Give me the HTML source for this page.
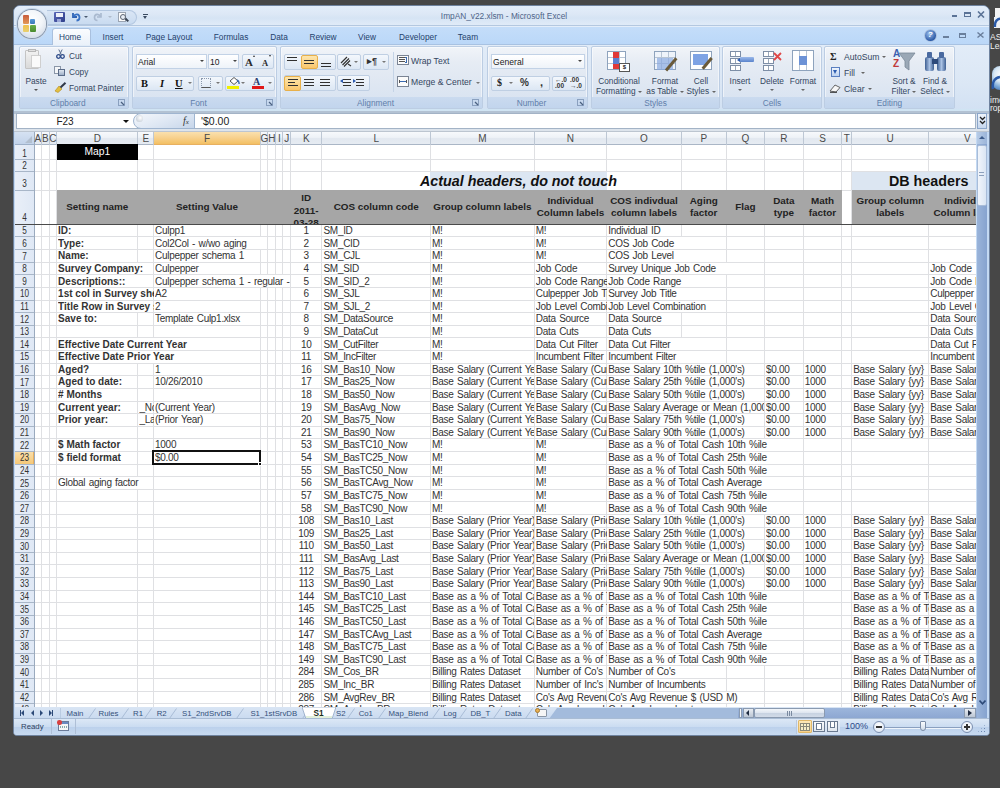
<!DOCTYPE html><html><head><meta charset="utf-8"><style>

*{margin:0;padding:0;box-sizing:border-box}
html,body{width:1000px;height:788px;overflow:hidden;background:#474747;font-family:"Liberation Sans",sans-serif}
.a{position:absolute}
.t{position:absolute;white-space:nowrap;overflow:hidden;font-size:10px;letter-spacing:-0.3px;word-spacing:1px;color:#333;line-height:12px}
.t.b{letter-spacing:0;word-spacing:0}
.b{font-weight:bold}
.ch{position:absolute;font-size:10px;color:#4a4a4a;text-align:center;line-height:12px;white-space:nowrap;overflow:hidden}
.rh{position:absolute;font-size:10px;color:#333;text-align:center;white-space:nowrap;transform:scaleX(0.82)}
.gl{position:absolute;background:#dfe0e3}
.rib{position:absolute;font-size:8.3px;color:#2a3f63;white-space:nowrap;line-height:10px}
.grp{position:absolute;border:1px solid #bccde3;border-radius:2px;background:linear-gradient(#f1f4f9 0%,#e6ecf4 25%,#dfe7f2 60%,#d6e2f1 100%);box-shadow:inset 0 0 0 1px rgba(255,255,255,0.5)}
.glab{position:absolute;left:0;right:0;bottom:0;height:11px;background:linear-gradient(#cadaef,#c2d5ed);font-size:8.3px;color:#5f7eaa;text-align:center;line-height:12px}
.tab{position:absolute;font-size:8.3px;color:#24416b;white-space:nowrap;top:31.5px;line-height:10px}
.btn{position:absolute;border:1px solid #bfcfe3;border-radius:2px;background:linear-gradient(#f3f7fc,#dce7f4)}
.sht{position:absolute;font-size:9px;color:#34507a;top:707.5px;white-space:nowrap}

</style></head><body>
<div class="a" style="left:994.5px;top:8px;width:6px;height:8.5px;background:#f4f4f4"></div>
<div class="a" style="left:993.5px;top:16.5px;width:7px;height:11.5px;background:#eef2f6"></div>
<svg class="a" style="left:993px;top:16px" width="8" height="12"><path d="M2 11 C1.5 6 3.5 3 8 2.5" fill="none" stroke="#2a5aa8" stroke-width="2.4"/></svg>
<div class="a" style="left:990px;top:33px;font-size:8.5px;color:#f0f0f0;line-height:8.5px">ASP<br>Lea</div>
<div class="a" style="left:991.5px;top:66px;width:16px;height:24px;border-radius:8px;background:radial-gradient(circle at 60% 35%,#ffffff 0%,#d8e8f4 40%,#7aa8d8 70%,#3a6cb0 100%)"></div>
<svg class="a" style="left:991px;top:74px" width="9" height="16"><path d="M2 15 C1 9 3 4 9 3" fill="none" stroke="#2a5aa8" stroke-width="2.6"/></svg>
<div class="a" style="left:990px;top:95.5px;font-size:8.5px;color:#f0f0f0;line-height:8.5px">ime<br>rop</div>
<div class="a" style="left:13px;top:5px;width:977px;height:731px;border-radius:7px 7px 4px 4px;background:#c3d9f3;border:1px solid #6f839f"></div>
<div class="a" style="left:14px;top:6px;width:975px;height:19.5px;border-radius:6px 6px 0 0;background:linear-gradient(#e3edf9 0%,#dde8f6 40%,#d6e4f4 60%,#e2ecf8 100%)"></div>
<div class="a" style="left:14px;top:25px;width:975px;height:1px;background:#b4c8e0"></div>
<div class="a" style="left:14px;top:26px;width:975px;height:1px;background:#e4eefa"></div>
<div class="a" style="left:4px;width:1000px;top:11px;text-align:center;font-size:8.3px;color:#4e6488;line-height:11px">ImpAN_v22.xlsm - Microsoft Excel</div>
<div class="a" style="left:952px;top:15px;width:5px;height:2px;background:#5b7396"></div>
<div class="a" style="left:964px;top:12px;width:7px;height:5px;border:1px solid #5b7396;border-top-width:2px"></div>
<svg class="a" style="left:977px;top:10.5px" width="8" height="7"><path d="M1 0.5 L7 6.5 M7 0.5 L1 6.5" stroke="#5b7396" stroke-width="1.6"/></svg>
<div class="a" style="left:47px;top:10px;width:90px;height:15px;border-radius:0 8px 8px 0;background:linear-gradient(#dae6f5,#c9dbf0);border:1px solid #b3c7e0;border-left:none"></div>
<div class="a" style="left:54px;top:12px;width:10.5px;height:10px;background:linear-gradient(135deg,#5b68b8,#2f3f8a);border-radius:1px"></div>
<div class="a" style="left:56px;top:12.5px;width:6.5px;height:4px;background:#eef0f8"></div>
<div class="a" style="left:57px;top:19px;width:4px;height:3px;background:#9aa6d8"></div>
<svg class="a" style="left:70px;top:11px" width="11" height="11"><path d="M3 2 L3 6 L7 6" fill="none" stroke="#2f63b5" stroke-width="1.8"/><path d="M3.5 5.5 C5 2.5 9.5 2.5 9.5 6.5 C9.5 8.5 8 9.5 6.5 9.5" fill="none" stroke="#3a72c4" stroke-width="1.8"/></svg>
<div class="a" style="left:84px;top:16px;border-left:2px solid transparent;border-right:2px solid transparent;border-top:2px solid #4a5a70"></div>
<svg class="a" style="left:93px;top:11px" width="11" height="11"><path d="M8 2 L8 6 L4 6" fill="none" stroke="#a9b9cf" stroke-width="1.6"/><path d="M7.5 5.5 C6 2.5 1.5 2.5 1.5 6.5 C1.5 8.5 3 9.5 4.5 9.5" fill="none" stroke="#a9b9cf" stroke-width="1.6"/></svg>
<div class="a" style="left:108px;top:16px;border-left:2px solid transparent;border-right:2px solid transparent;border-top:2px solid #b0bccb"></div>
<div class="a" style="left:118px;top:11.5px;width:8px;height:10.5px;background:#fbfbfb;border:1px solid #9aa4b2"></div>
<div class="a" style="left:120px;top:14px;width:6px;height:6px;border:1.3px solid #5a6472;border-radius:50%;background:#e8eef6"></div>
<div class="a" style="left:125px;top:19px;width:4px;height:1.6px;background:#3a4452;transform:rotate(45deg)"></div>
<div class="a" style="left:143px;top:13.5px;width:5px;height:1px;background:#3a4a60"></div>
<div class="a" style="left:143px;top:16px;border-left:2.5px solid transparent;border-right:2.5px solid transparent;border-top:3px solid #3a4a60"></div>
<div class="a" style="left:14px;top:27px;width:975px;height:17.5px;background:linear-gradient(#c4ddf9,#bad7f8)"></div>
<div class="a" style="left:14px;top:43.8px;width:975px;height:1px;background:#a8c2e2"></div>
<div class="a" style="left:51.5px;top:28px;width:39px;height:17.5px;border:1px solid #a9c0de;border-bottom:none;border-radius:3px 3px 0 0;background:linear-gradient(#fafcff,#e9f0f9)"></div>
<div class="tab" style="left:20px;width:100px;text-align:center">Home</div>
<div class="tab" style="left:63px;width:100px;text-align:center">Insert</div>
<div class="tab" style="left:119px;width:100px;text-align:center">Page Layout</div>
<div class="tab" style="left:181px;width:100px;text-align:center">Formulas</div>
<div class="tab" style="left:229px;width:100px;text-align:center">Data</div>
<div class="tab" style="left:273px;width:100px;text-align:center">Review</div>
<div class="tab" style="left:317px;width:100px;text-align:center">View</div>
<div class="tab" style="left:368px;width:100px;text-align:center">Developer</div>
<div class="tab" style="left:418px;width:100px;text-align:center">Team</div>
<div class="a" style="left:925px;top:30px;width:10.5px;height:10.5px;border-radius:50%;background:radial-gradient(circle at 40% 35%,#9cc0ee,#2d5aa6 70%,#5a86c8);box-shadow:0 0 0 0.8px #a8bcd8;color:#fff;font-size:8px;font-weight:bold;text-align:center;line-height:10.5px;font-style:italic">?</div>
<div class="a" style="left:943px;top:36px;width:6px;height:1.6px;background:#6a7f9c"></div>
<div class="a" style="left:959px;top:32.5px;width:7px;height:5px;border:1px solid #6a7f9c;border-top-width:2px"></div>
<svg class="a" style="left:976.5px;top:32px" width="7" height="6"><path d="M0.5 0.5 L6.5 5.5 M6.5 0.5 L0.5 5.5" stroke="#6a7f9c" stroke-width="1.4"/></svg>
<div class="a" style="left:14px;top:44.8px;width:975px;height:65.5px;background:linear-gradient(#e2ecf8,#dbe7f5 60%,#d2e1f3)"></div>
<div class="grp" style="left:18.5px;top:46px;width:110.5px;height:62.5px"><div class="glab" style="padding-right:12px">Clipboard</div><svg class="a" style="right:3px;bottom:2px" width="7" height="7"><rect x="0.5" y="0.5" width="6" height="6" fill="none" stroke="#8aa0bf" stroke-width="1"/><path d="M3 3 L6 6" stroke="#4a6080" stroke-width="1.2"/></svg></div>
<div class="grp" style="left:132px;top:46px;width:145px;height:62.5px"><div class="glab" style="padding-right:12px">Font</div><svg class="a" style="right:3px;bottom:2px" width="7" height="7"><rect x="0.5" y="0.5" width="6" height="6" fill="none" stroke="#8aa0bf" stroke-width="1"/><path d="M3 3 L6 6" stroke="#4a6080" stroke-width="1.2"/></svg></div>
<div class="grp" style="left:280px;top:46px;width:203px;height:62.5px"><div class="glab" style="padding-right:12px">Alignment</div><svg class="a" style="right:3px;bottom:2px" width="7" height="7"><rect x="0.5" y="0.5" width="6" height="6" fill="none" stroke="#8aa0bf" stroke-width="1"/><path d="M3 3 L6 6" stroke="#4a6080" stroke-width="1.2"/></svg></div>
<div class="grp" style="left:487px;top:46px;width:101px;height:62.5px"><div class="glab" style="padding-right:12px">Number</div><svg class="a" style="right:3px;bottom:2px" width="7" height="7"><rect x="0.5" y="0.5" width="6" height="6" fill="none" stroke="#8aa0bf" stroke-width="1"/><path d="M3 3 L6 6" stroke="#4a6080" stroke-width="1.2"/></svg></div>
<div class="grp" style="left:591px;top:46px;width:129px;height:62.5px"><div class="glab" style="">Styles</div></div>
<div class="grp" style="left:722px;top:46px;width:100px;height:62.5px"><div class="glab" style="">Cells</div></div>
<div class="grp" style="left:824px;top:46px;width:131px;height:62.5px"><div class="glab" style="">Editing</div></div>
<div class="a" style="left:25px;top:50px;width:14px;height:19px;background:linear-gradient(#f2f2f2,#d9d9d9);border:1px solid #c4c4c4;border-radius:1px"></div>
<div class="a" style="left:28px;top:49px;width:8px;height:3px;background:#e0e0e0;border:1px solid #b8b8b8"></div>
<div class="a" style="left:31px;top:55px;width:10px;height:13px;background:#fafafa;border:1px solid #cfcfcf"></div>
<div class="rib" style="left:20px;width:32px;text-align:center;top:76px;color:#34465f">Paste</div>
<div class="a" style="left:34px;top:89px;border-left:2px solid transparent;border-right:2px solid transparent;border-top:2px solid #555"></div>
<svg class="a" style="left:56px;top:49px" width="9" height="10"><circle cx="2.5" cy="7.5" r="1.8" fill="none" stroke="#2c4a8a" stroke-width="1.3"/><circle cx="6.5" cy="7.5" r="1.8" fill="none" stroke="#2c4a8a" stroke-width="1.3"/><path d="M2.8 0.5 L5.5 6 M6.2 0.5 L3.5 6" stroke="#5a6e90" stroke-width="1"/></svg>
<div class="rib" style="left:69px;top:51px;color:#34465f">Cut</div>
<div class="a" style="left:54px;top:66px;width:7px;height:8px;border:1px solid #8a96a8;background:#f4f6f9"></div>
<div class="a" style="left:58px;top:69px;width:7px;height:7px;border:1px solid #5a6b88;background:linear-gradient(#dfe6f0,#9fb0c8)"></div>
<div class="rib" style="left:69px;top:67px;color:#34465f">Copy</div>
<svg class="a" style="left:54px;top:82px" width="13" height="11"><path d="M1 9 L5 4 L8 7 L4 10.5 Z" fill="#e4c040" stroke="#b08a20" stroke-width="0.6"/><path d="M6.5 5.5 L11.5 0.8" stroke="#303848" stroke-width="2"/></svg>
<div class="rib" style="left:69px;top:83px;color:#34465f">Format Painter</div>
<div class="a" style="left:136px;top:53.5px;width:71px;height:15.5px;background:linear-gradient(#ffffff,#eef3f9);border:1px solid #c2d2e6"></div>
<div class="rib" style="left:138px;top:57px;color:#222;font-size:8.6px">Arial</div>
<div class="a" style="left:200px;top:60px;border-left:2px solid transparent;border-right:2px solid transparent;border-top:2px solid #444"></div>
<div class="a" style="left:208px;top:53.5px;width:31px;height:15.5px;background:linear-gradient(#ffffff,#eef3f9);border:1px solid #c2d2e6"></div>
<div class="rib" style="left:210px;top:57px;color:#222;font-size:8.6px">10</div>
<div class="a" style="left:233px;top:60px;border-left:2px solid transparent;border-right:2px solid transparent;border-top:2px solid #444"></div>
<div class="btn" style="left:242px;top:54px;width:32px;height:15px"></div>
<div class="a" style="left:245px;top:56px;font-family:'Liberation Serif',serif;font-weight:bold;font-size:11px;color:#2a2a2a;line-height:12px">A</div>
<div class="a" style="left:253px;top:55px;border-left:1.5px solid transparent;border-right:1.5px solid transparent;border-bottom:2px solid #333"></div>
<div class="a" style="left:262px;top:58px;font-family:'Liberation Serif',serif;font-weight:bold;font-size:8.5px;color:#2a2a2a;line-height:10px">A</div>
<div class="a" style="left:269px;top:55px;border-left:1.5px solid transparent;border-right:1.5px solid transparent;border-top:2px solid #333"></div>
<div class="btn" style="left:136px;top:75.5px;width:58px;height:15.5px"></div>
<div class="a" style="left:141px;top:77px;font-family:'Liberation Serif',serif;font-weight:bold;font-size:10.5px;color:#111;line-height:13px">B</div>
<div class="a" style="left:160px;top:77px;font-family:'Liberation Serif',serif;font-style:italic;font-weight:bold;font-size:10.5px;color:#111;line-height:13px">I</div>
<div class="a" style="left:175px;top:77px;font-family:'Liberation Serif',serif;font-weight:bold;font-size:10.5px;color:#111;line-height:13px;text-decoration:underline">U</div>
<div class="a" style="left:188px;top:82px;border-left:2px solid transparent;border-right:2px solid transparent;border-top:2px solid #777"></div>
<div class="btn" style="left:198px;top:75.5px;width:25px;height:15.5px"></div>
<div class="a" style="left:201px;top:78px;width:10px;height:10px;border:1px dotted #8a98ac;border-bottom:1.5px solid #555;background:linear-gradient(90deg,transparent 45%,#aab4c4 45%,#aab4c4 55%,transparent 55%),linear-gradient(transparent 45%,#aab4c4 45%,#aab4c4 55%,transparent 55%)"></div>
<div class="a" style="left:216px;top:82px;border-left:2px solid transparent;border-right:2px solid transparent;border-top:2px solid #777"></div>
<div class="btn" style="left:225px;top:75.5px;width:50px;height:15.5px"></div>
<svg class="a" style="left:228px;top:76px" width="12" height="10"><path d="M2 5 L6 1.5 L10 5 L6 8.5 Z" fill="#fff" stroke="#555" stroke-width="1"/><path d="M9 4 Q11.5 5 11 8" fill="none" stroke="#3a6ab0" stroke-width="1.4"/></svg>
<div class="a" style="left:227px;top:86px;width:12px;height:3px;background:#f0f000"></div>
<div class="a" style="left:241px;top:82px;border-left:2px solid transparent;border-right:2px solid transparent;border-top:2px solid #777"></div>
<div class="a" style="left:253px;top:76px;font-size:10px;color:#2c3e70;line-height:11px;font-weight:bold;font-family:'Liberation Serif',serif">A</div>
<div class="a" style="left:252px;top:86px;width:12px;height:3px;background:#e01818"></div>
<div class="a" style="left:268px;top:82px;border-left:2px solid transparent;border-right:2px solid transparent;border-top:2px solid #777"></div>
<div class="btn" style="left:283.5px;top:53.5px;width:52px;height:16px"></div>
<div class="a" style="left:301px;top:54.5px;width:17px;height:14px;background:linear-gradient(#fde6ae,#f9c66c);border:1px solid #e8b04a;border-radius:2px"></div>
<div class="a" style="left:287px;top:56.5px;width:10px;height:1.7px;background:#303030"></div>
<div class="a" style="left:287px;top:59.5px;width:10px;height:1.7px;background:#303030"></div>
<div class="a" style="left:304px;top:59.5px;width:10px;height:1.7px;background:#303030"></div>
<div class="a" style="left:304px;top:62.5px;width:10px;height:1.7px;background:#303030"></div>
<div class="a" style="left:321px;top:62.5px;width:10px;height:1.7px;background:#303030"></div>
<div class="a" style="left:321px;top:65.5px;width:10px;height:1.7px;background:#303030"></div>
<div class="btn" style="left:337px;top:53.5px;width:24px;height:16px"></div>
<svg class="a" style="left:340px;top:55px" width="12" height="12"><path d="M1 8 L7 2 M2.5 10 L9 3.5 M4 11.5 L10 5.5" stroke="#333" stroke-width="1.2"/><path d="M8 9 L11 11" stroke="#333" stroke-width="1.2"/></svg>
<div class="a" style="left:354px;top:61px;border-left:2px solid transparent;border-right:2px solid transparent;border-top:2px solid #777"></div>
<div class="btn" style="left:363px;top:53.5px;width:26px;height:16px"></div>
<div class="a" style="left:367px;top:56px;font-size:9px;color:#333;line-height:10px;font-weight:bold">&#x25B8;&#xB6;</div>
<div class="a" style="left:382px;top:61px;border-left:2px solid transparent;border-right:2px solid transparent;border-top:2px solid #777"></div>
<div class="a" style="left:393px;top:52px;width:1px;height:40px;background:#c4d3e6"></div>
<div class="btn" style="left:283.5px;top:75px;width:52px;height:16px"></div>
<div class="a" style="left:284px;top:75.5px;width:17px;height:15px;background:linear-gradient(#fde6ae,#f9c66c);border:1px solid #e8b04a;border-radius:2px"></div>
<div class="a" style="left:288px;top:78.5px;width:10px;height:1.7px;background:#303030"></div>
<div class="a" style="left:288px;top:81.5px;width:7px;height:1.7px;background:#303030"></div>
<div class="a" style="left:288px;top:84.5px;width:10px;height:1.7px;background:#303030"></div>
<div class="a" style="left:304px;top:78.5px;width:10px;height:1.7px;background:#303030"></div>
<div class="a" style="left:304px;top:81.5px;width:10px;height:1.7px;background:#303030"></div>
<div class="a" style="left:304px;top:84.5px;width:10px;height:1.7px;background:#303030"></div>
<div class="a" style="left:320px;top:78.5px;width:10px;height:1.7px;background:#303030"></div>
<div class="a" style="left:320px;top:81.5px;width:10px;height:1.7px;background:#303030"></div>
<div class="a" style="left:320px;top:84.5px;width:10px;height:1.7px;background:#303030"></div>
<div class="btn" style="left:337px;top:75px;width:33px;height:16px"></div>
<div class="a" style="left:343px;top:78.5px;width:8px;height:1.7px;background:#303030"></div>
<div class="a" style="left:343px;top:81.5px;width:8px;height:1.7px;background:#303030"></div>
<div class="a" style="left:343px;top:84.5px;width:8px;height:1.7px;background:#303030"></div>
<div class="a" style="left:356px;top:78.5px;width:8px;height:1.7px;background:#303030"></div>
<div class="a" style="left:356px;top:81.5px;width:8px;height:1.7px;background:#303030"></div>
<div class="a" style="left:356px;top:84.5px;width:8px;height:1.7px;background:#303030"></div>
<div class="a" style="left:340px;top:79px;border-top:2px solid transparent;border-bottom:2px solid transparent;border-right:3px solid #2a5ab0"></div>
<div class="a" style="left:353px;top:79px;border-top:2px solid transparent;border-bottom:2px solid transparent;border-left:3px solid #2a5ab0"></div>
<div class="a" style="left:397px;top:55px;width:12px;height:10px;border:1px solid #7a8494;background:#fbfbfb"></div>
<div class="a" style="left:399px;top:57px;width:6px;height:1px;background:#555"></div>
<div class="a" style="left:399px;top:59px;width:6px;height:1px;background:#555"></div>
<div class="a" style="left:399px;top:61px;width:6px;height:1px;background:#555"></div>
<div class="a" style="left:405px;top:57px;width:2px;height:6px;border:1px solid #3a6ab0;border-left:none"></div>
<div class="rib" style="left:411px;top:56px;font-size:8.6px;color:#34465f">Wrap Text</div>
<div class="a" style="left:397px;top:76px;width:12px;height:11px;border:1px solid #7a8494;background:#fbfbfb"></div>
<div class="a" style="left:399px;top:80px;width:8px;height:3px;border-left:1px solid #555;border-right:1px solid #555;background:linear-gradient(transparent 40%,#3a6ab0 40%,#3a6ab0 60%,transparent 60%)"></div>
<div class="rib" style="left:411px;top:77px;font-size:8.6px;color:#34465f">Merge &amp; Center</div>
<div class="a" style="left:476px;top:82px;border-left:2px solid transparent;border-right:2px solid transparent;border-top:2px solid #777"></div>
<div class="a" style="left:491px;top:53.5px;width:94px;height:15.5px;background:linear-gradient(#ffffff,#eef3f9);border:1px solid #c2d2e6"></div>
<div class="rib" style="left:493px;top:57px;color:#222;font-size:8.6px">General</div>
<div class="a" style="left:578px;top:60px;border-left:2px solid transparent;border-right:2px solid transparent;border-top:2px solid #444"></div>
<div class="btn" style="left:491px;top:75.5px;width:59px;height:15.5px"></div>
<div class="a" style="left:497px;top:77px;font-size:10px;font-weight:bold;color:#222;line-height:12px;font-family:'Liberation Serif',serif">$</div>
<div class="a" style="left:509px;top:82px;border-left:2px solid transparent;border-right:2px solid transparent;border-top:2px solid #777"></div>
<div class="a" style="left:520px;top:77px;font-size:10px;font-weight:bold;color:#333;line-height:12px">%</div>
<div class="a" style="left:540px;top:76px;font-size:11px;font-weight:bold;color:#333;line-height:12px">,</div>
<div class="btn" style="left:552px;top:75.5px;width:34px;height:15.5px"></div>
<div class="a" style="left:555px;top:76.5px;font-size:6.5px;font-weight:bold;color:#333;line-height:6.5px">&#x2190;.0<br>.00</div>
<div class="a" style="left:570px;top:76.5px;font-size:6.5px;font-weight:bold;color:#333;line-height:6.5px">.00<br>&#x2192;.0</div>
<div class="a" style="left:607px;top:51px;width:19px;height:19px;background:#fff;border:1px solid #8ea3bd;background-image:linear-gradient(90deg,transparent 32%,#b7c4d4 32%,#b7c4d4 36%,transparent 36%,transparent 66%,#b7c4d4 66%,#b7c4d4 70%,transparent 70%),linear-gradient(transparent 32%,#b7c4d4 32%,#b7c4d4 36%,transparent 36%,transparent 66%,#b7c4d4 66%,#b7c4d4 70%,transparent 70%)"></div>
<div class="a" style="left:613px;top:51.5px;width:6px;height:6px;background:#e03838"></div>
<div class="a" style="left:613px;top:57.5px;width:6px;height:6px;background:#5b7fd0"></div>
<div class="a" style="left:613px;top:63.5px;width:6px;height:5px;background:#e03838"></div>
<div class="a" style="left:619px;top:63px;width:11px;height:9px;background:#fff;border:1px solid #555;font-size:6px;line-height:7px;text-align:center;color:#222;font-weight:bold">$</div>
<div class="rib" style="left:579px;width:80px;text-align:center;top:76px;color:#34465f">Conditional</div>
<div class="rib" style="left:579px;width:80px;text-align:center;top:86px;color:#34465f">Formatting<span style="display:inline-block;margin-left:2.5px;vertical-align:middle;border-left:2px solid transparent;border-right:2px solid transparent;border-top:2px solid #666"></span></div>
<div class="a" style="left:654px;top:51px;width:22px;height:19px;background:#eef3fa;border:1px solid #8ea3bd;background-image:linear-gradient(90deg,transparent 32%,#b7c4d4 32%,#b7c4d4 36%,transparent 36%,transparent 66%,#b7c4d4 66%,#b7c4d4 70%,transparent 70%),linear-gradient(transparent 32%,#b7c4d4 32%,#b7c4d4 36%,transparent 36%,transparent 66%,#b7c4d4 66%,#b7c4d4 70%,transparent 70%)"></div>
<div class="a" style="left:657px;top:58px;width:16px;height:12px;background:#8aaae0;opacity:0.7"></div>
<div class="a" style="left:663px;top:63px;width:16px;height:2.5px;background:#6a5a3a;transform:rotate(-50deg)"></div>
<div class="rib" style="left:625px;width:80px;text-align:center;top:76px;color:#34465f">Format</div>
<div class="rib" style="left:625px;width:80px;text-align:center;top:86px;color:#34465f">as Table<span style="display:inline-block;margin-left:2.5px;vertical-align:middle;border-left:2px solid transparent;border-right:2px solid transparent;border-top:2px solid #666"></span></div>
<div class="a" style="left:690px;top:51px;width:22px;height:19px;background:#fff;border:1px solid #8ea3bd"></div>
<div class="a" style="left:693px;top:54px;width:15px;height:11px;background:#7ea3e4"></div>
<div class="a" style="left:700px;top:62px;width:14px;height:2.5px;background:#6a5a3a;transform:rotate(-50deg)"></div>
<div class="rib" style="left:661px;width:80px;text-align:center;top:76px;color:#34465f">Cell</div>
<div class="rib" style="left:661px;width:80px;text-align:center;top:86px;color:#34465f">Styles<span style="display:inline-block;margin-left:2.5px;vertical-align:middle;border-left:2px solid transparent;border-right:2px solid transparent;border-top:2px solid #666"></span></div>
<div class="a" style="left:730px;top:51px;width:11px;height:6px;background:#fff;border:1px solid #7d8ea6;background-image:linear-gradient(90deg,transparent 45%,#9aa8ba 45%,#9aa8ba 55%,transparent 55%)"></div>
<div class="a" style="left:730px;top:58px;width:11px;height:6px;background:#fff;border:1px solid #7d8ea6;background-image:linear-gradient(90deg,transparent 45%,#9aa8ba 45%,#9aa8ba 55%,transparent 55%)"></div>
<div class="a" style="left:730px;top:65px;width:11px;height:6px;background:#fff;border:1px solid #7d8ea6;background-image:linear-gradient(90deg,transparent 45%,#9aa8ba 45%,#9aa8ba 55%,transparent 55%)"></div>
<div class="a" style="left:740px;top:57px;width:14px;height:5px;background:linear-gradient(#9ab8ea,#5a84cc);border-radius:1px"></div>
<div class="a" style="left:737px;top:57.5px;border-top:2px solid transparent;border-bottom:2px solid transparent;border-right:3px solid #2a5ab0"></div>
<div class="rib" style="left:700px;width:80px;text-align:center;top:76px;color:#34465f">Insert</div>
<div class="a" style="left:738px;top:89px;border-left:2px solid transparent;border-right:2px solid transparent;border-top:2px solid #666"></div>
<div class="a" style="left:763px;top:51px;width:11px;height:6px;background:#fff;border:1px solid #7d8ea6;background-image:linear-gradient(90deg,transparent 45%,#9aa8ba 45%,#9aa8ba 55%,transparent 55%)"></div>
<div class="a" style="left:763px;top:58px;width:11px;height:6px;background:#fff;border:1px solid #7d8ea6;background-image:linear-gradient(90deg,transparent 45%,#9aa8ba 45%,#9aa8ba 55%,transparent 55%)"></div>
<div class="a" style="left:763px;top:65px;width:11px;height:6px;background:#fff;border:1px solid #7d8ea6;background-image:linear-gradient(90deg,transparent 45%,#9aa8ba 45%,#9aa8ba 55%,transparent 55%)"></div>
<svg class="a" style="left:773px;top:52px" width="9" height="9"><path d="M1 1 L8 8 M8 1 L1 8" stroke="#e04848" stroke-width="1.8"/></svg>
<div class="rib" style="left:732px;width:80px;text-align:center;top:76px;color:#34465f">Delete</div>
<div class="a" style="left:770px;top:89px;border-left:2px solid transparent;border-right:2px solid transparent;border-top:2px solid #666"></div>
<div class="a" style="left:792px;top:50px;width:22px;height:21px;background:#fff;border:1px solid #8ea3bd;background-image:linear-gradient(90deg,transparent 30%,#b7c4d4 30%,#b7c4d4 34%,transparent 34%,transparent 66%,#b7c4d4 66%,#b7c4d4 70%,transparent 70%)"></div>
<div class="a" style="left:799px;top:56px;width:8px;height:9px;background:#6c92d6"></div>
<div class="rib" style="left:763px;width:80px;text-align:center;top:76px;color:#34465f">Format</div>
<div class="a" style="left:801px;top:89px;border-left:2px solid transparent;border-right:2px solid transparent;border-top:2px solid #666"></div>
<div class="a" style="left:830px;top:51px;font-size:10px;font-weight:bold;color:#222;line-height:11px;font-family:'Liberation Serif',serif">&#x3A3;</div>
<div class="rib" style="left:844px;top:52px;font-size:8.6px;color:#34465f">AutoSum</div>
<div class="a" style="left:882px;top:56px;border-left:2px solid transparent;border-right:2px solid transparent;border-top:2px solid #666"></div>
<div class="a" style="left:830.5px;top:67px;width:9.5px;height:10px;background:linear-gradient(#eef4fc,#bcd2f0);border:1px solid #5a7fc0"></div>
<div class="a" style="left:832.5px;top:70px;border-left:2.5px solid transparent;border-right:2.5px solid transparent;border-top:4px solid #2c5cb0"></div>
<div class="rib" style="left:844px;top:68px;font-size:8.6px;color:#34465f">Fill</div>
<div class="a" style="left:861px;top:72px;border-left:2px solid transparent;border-right:2px solid transparent;border-top:2px solid #666"></div>
<svg class="a" style="left:829px;top:83px" width="13" height="10"><path d="M1 8 L6 2 L11 4.5 L7 9 Z" fill="#f6f6f6" stroke="#555" stroke-width="0.9"/><path d="M1 9.3 L8 9.3" stroke="#333" stroke-width="1"/></svg>
<div class="rib" style="left:844px;top:84px;font-size:8.6px;color:#34465f">Clear</div>
<div class="a" style="left:868px;top:88px;border-left:2px solid transparent;border-right:2px solid transparent;border-top:2px solid #666"></div>
<div class="a" style="left:893px;top:49px;font-size:10px;font-weight:bold;color:#3a60b0;line-height:10px">A</div>
<div class="a" style="left:893px;top:59px;font-size:10px;font-weight:bold;color:#c03a3a;line-height:10px">Z</div>
<svg class="a" style="left:898px;top:52px" width="18" height="20"><path d="M1 1 L17 1 L11 9 L11 18 L7 15 L7 9 Z" fill="#9aa8b6" stroke="#7a8898" stroke-width="0.8"/></svg>
<div class="rib" style="left:864px;width:80px;text-align:center;top:76px;color:#34465f">Sort &amp;</div>
<div class="rib" style="left:864px;width:80px;text-align:center;top:86px;color:#34465f">Filter<span style="display:inline-block;margin-left:2.5px;vertical-align:middle;border-left:2px solid transparent;border-right:2px solid transparent;border-top:2px solid #666"></span></div>
<div class="a" style="left:925px;top:57px;width:9px;height:14px;background:linear-gradient(90deg,#3e5f92,#aac2e4 50%,#3e5f92);border-radius:2px"></div>
<div class="a" style="left:937px;top:57px;width:9px;height:14px;background:linear-gradient(90deg,#3e5f92,#aac2e4 50%,#3e5f92);border-radius:2px"></div>
<div class="a" style="left:927px;top:52px;width:5px;height:6px;background:#4a6aa0;border-radius:1px"></div>
<div class="a" style="left:939px;top:52px;width:5px;height:6px;background:#4a6aa0;border-radius:1px"></div>
<div class="a" style="left:932px;top:59px;width:6px;height:5px;background:#2e4a7a"></div>
<div class="rib" style="left:895px;width:80px;text-align:center;top:76px;color:#34465f">Find &amp;</div>
<div class="rib" style="left:895px;width:80px;text-align:center;top:86px;color:#34465f">Select<span style="display:inline-block;margin-left:2.5px;vertical-align:middle;border-left:2px solid transparent;border-right:2px solid transparent;border-top:2px solid #666"></span></div>
<div class="a" style="left:18px;top:10px;width:27.5px;height:27.5px;border-radius:50%;background:radial-gradient(circle at 50% 35%,#ffffff 0%,#f2f5f9 45%,#d5dde8 80%,#a8b4c4 100%);box-shadow:0 0 0 1px #8896aa, 0 0 0 2px #c8d8ec"></div>
<div class="a" style="left:22.5px;top:15px;width:6px;height:9px;background:linear-gradient(#c85a3a,#e29a5a);border-radius:1px"></div>
<div class="a" style="left:29.5px;top:18.5px;width:5.5px;height:5.5px;background:linear-gradient(#5a9ad8,#3a78b8);border-radius:1px"></div>
<div class="a" style="left:22.5px;top:24.5px;width:6px;height:7px;background:linear-gradient(#f0c050,#e8d070);border-radius:1px"></div>
<div class="a" style="left:29.5px;top:24.5px;width:6px;height:7px;background:linear-gradient(#6ab04a,#4a8a30);border-radius:1px"></div>
<div class="a" style="left:14px;top:108.6px;width:975px;height:23.7px;background:#dde4ec"></div>
<div class="a" style="left:14px;top:108.6px;width:975px;height:2.4px;background:#d0e4f3"></div>
<div class="a" style="left:14px;top:111px;width:975px;height:2.5px;background:#b3c2d3"></div>
<div class="a" style="left:14px;top:131px;width:975px;height:1.3px;background:#bcc5d0"></div>
<div class="a" style="left:16px;top:113.3px;width:960px;height:15.5px;background:#fff;border:1px solid #a3b3c6"></div>
<div class="a" style="left:16px;top:115.5px;width:98px;text-align:center;font-size:10px;color:#222;line-height:11px">F23</div>
<div class="a" style="left:123px;top:120px;border-left:3px solid transparent;border-right:3px solid transparent;border-top:3px solid #111"></div>
<div class="a" style="left:133px;top:113.3px;width:62px;height:15.5px;border-radius:8px 0 0 8px;background:linear-gradient(160deg,#f4f7fb,#dfe8f4 50%,#c7d6ea);border:1px solid #9fb5d0"></div>
<div class="a" style="left:135.5px;top:115px;width:7px;height:7px;border-radius:50%;background:radial-gradient(circle at 60% 40%,#fff,#b8c2ce)"></div>
<div class="a" style="left:183px;top:115px;font-family:'Liberation Serif',serif;font-style:italic;font-size:10px;color:#333;line-height:12px"><i>f</i><span style="font-size:7px">x</span></div>
<div class="a" style="left:201px;top:115.5px;font-size:10.5px;color:#222;line-height:11px">'$0.00</div>
<div class="a" style="left:977px;top:113px;width:9.5px;height:15.5px;background:linear-gradient(#eef4fb,#c6d7ee);border:1px solid #8ba6ca"></div>
<svg class="a" style="left:978.5px;top:116px" width="7" height="9"><path d="M1 1 L3.5 3.5 L6 1 M1 5 L3.5 7.5 L6 5" fill="none" stroke="#222" stroke-width="1.3"/></svg>
<div class="a" style="left:15.3px;top:132.3px;width:961.2px;height:574.7px;background:#fff;overflow:hidden" id="grid">
<div class="a" style="left:0;top:0;width:18.999999999999996px;height:574.7px;background:linear-gradient(90deg,#e9eff8,#dfe8f5)"></div>
<div class="a" style="left:0;top:0;width:976.5px;height:12.599999999999994px;background:linear-gradient(#f7f9fc 0%,#eef2f7 45%,#e2e8f0 55%,#e6ebf2 100%);border-bottom:1px solid #aab6c6"></div>
<div class="a" style="left:0;top:0;width:18.999999999999996px;height:12.599999999999994px;background:linear-gradient(#d6e2f2,#c2d3ea);border-bottom:1px solid #9eb0c8"></div>
<svg class="a" style="left:10.00px;top:3.60px" width="7" height="7"><path d="M7 0 L7 7 L0 7 Z" fill="#b2bfcf"/></svg>
<div class="a" style="left:41.30px;top:12.10px;width:81.40px;height:15.20px;background:#000"></div>
<div class="a" style="left:415.20px;top:39.60px;width:176.25px;height:18.20px;background:#dce6f2"></div>
<div class="a" style="left:836.45px;top:39.60px;width:154.00px;height:18.20px;background:#dce6f2"></div>
<div class="a" style="left:41.30px;top:57.80px;width:785.15px;height:34.10px;background:#a6a6a6"></div>
<div class="a" style="left:836.45px;top:57.80px;width:154.00px;height:34.10px;background:#a6a6a6"></div>
<div class="a" style="left:138.30px;top:0;width:106.90px;height:12.599999999999994px;background:linear-gradient(#fae0ae,#f7d08c 50%,#f3c063);border-bottom:1px solid #e8b060"></div>
<div class="a" style="left:0;top:319.18px;width:18.999999999999996px;height:12.61px;background:linear-gradient(#fae0ae,#f5c878);border-right:1px solid #e8b060"></div>
<div class="gl" style="left:25.50px;top:12.10px;width:1px;height:562.60px"></div>
<div class="gl" style="left:33.40px;top:12.10px;width:1px;height:562.60px"></div>
<div class="gl" style="left:40.80px;top:12.10px;width:1px;height:562.60px"></div>
<div class="gl" style="left:122.20px;top:27.30px;width:1px;height:30.50px"></div>
<div class="gl" style="left:122.20px;top:91.90px;width:1px;height:38.13px"></div>
<div class="gl" style="left:122.20px;top:180.47px;width:1px;height:25.22px"></div>
<div class="gl" style="left:122.20px;top:230.91px;width:1px;height:113.49px"></div>
<div class="gl" style="left:122.20px;top:357.01px;width:1px;height:217.69px"></div>
<div class="gl" style="left:137.80px;top:12.10px;width:1px;height:45.70px"></div>
<div class="gl" style="left:137.80px;top:91.90px;width:1px;height:113.79px"></div>
<div class="gl" style="left:137.80px;top:230.91px;width:1px;height:343.79px"></div>
<div class="gl" style="left:244.70px;top:12.10px;width:1px;height:45.70px"></div>
<div class="gl" style="left:244.70px;top:91.90px;width:1px;height:12.61px"></div>
<div class="gl" style="left:244.70px;top:117.42px;width:1px;height:25.22px"></div>
<div class="gl" style="left:244.70px;top:155.25px;width:1px;height:419.45px"></div>
<div class="gl" style="left:252.20px;top:12.10px;width:1px;height:45.70px"></div>
<div class="gl" style="left:252.20px;top:91.90px;width:1px;height:50.74px"></div>
<div class="gl" style="left:252.20px;top:155.25px;width:1px;height:419.45px"></div>
<div class="gl" style="left:260.20px;top:12.10px;width:1px;height:45.70px"></div>
<div class="gl" style="left:260.20px;top:91.90px;width:1px;height:50.74px"></div>
<div class="gl" style="left:260.20px;top:155.25px;width:1px;height:419.45px"></div>
<div class="gl" style="left:267.20px;top:12.10px;width:1px;height:45.70px"></div>
<div class="gl" style="left:267.20px;top:91.90px;width:1px;height:50.74px"></div>
<div class="gl" style="left:267.20px;top:155.25px;width:1px;height:419.45px"></div>
<div class="gl" style="left:274.70px;top:12.10px;width:1px;height:45.70px"></div>
<div class="gl" style="left:274.70px;top:91.90px;width:1px;height:482.80px"></div>
<div class="gl" style="left:306.20px;top:12.10px;width:1px;height:45.70px"></div>
<div class="gl" style="left:306.20px;top:91.90px;width:1px;height:482.80px"></div>
<div class="gl" style="left:414.70px;top:12.10px;width:1px;height:27.50px"></div>
<div class="gl" style="left:414.70px;top:91.90px;width:1px;height:482.80px"></div>
<div class="gl" style="left:518.45px;top:12.10px;width:1px;height:27.50px"></div>
<div class="gl" style="left:518.45px;top:91.90px;width:1px;height:482.80px"></div>
<div class="gl" style="left:590.95px;top:12.10px;width:1px;height:27.50px"></div>
<div class="gl" style="left:590.95px;top:91.90px;width:1px;height:482.80px"></div>
<div class="gl" style="left:665.45px;top:12.10px;width:1px;height:45.70px"></div>
<div class="gl" style="left:665.45px;top:91.90px;width:1px;height:12.61px"></div>
<div class="gl" style="left:665.45px;top:180.47px;width:1px;height:25.22px"></div>
<div class="gl" style="left:665.45px;top:583.99px;width:1px;height:-9.29px"></div>
<div class="gl" style="left:710.45px;top:12.10px;width:1px;height:45.70px"></div>
<div class="gl" style="left:710.45px;top:91.90px;width:1px;height:38.13px"></div>
<div class="gl" style="left:710.45px;top:142.64px;width:1px;height:88.27px"></div>
<div class="gl" style="left:710.45px;top:533.55px;width:1px;height:25.22px"></div>
<div class="gl" style="left:710.45px;top:571.38px;width:1px;height:3.32px"></div>
<div class="gl" style="left:748.70px;top:12.10px;width:1px;height:45.70px"></div>
<div class="gl" style="left:748.70px;top:91.90px;width:1px;height:214.67px"></div>
<div class="gl" style="left:748.70px;top:382.23px;width:1px;height:75.66px"></div>
<div class="gl" style="left:748.70px;top:533.55px;width:1px;height:41.15px"></div>
<div class="gl" style="left:787.45px;top:12.10px;width:1px;height:45.70px"></div>
<div class="gl" style="left:787.45px;top:91.90px;width:1px;height:482.80px"></div>
<div class="gl" style="left:825.95px;top:12.10px;width:1px;height:562.60px"></div>
<div class="gl" style="left:835.95px;top:12.10px;width:1px;height:562.60px"></div>
<div class="gl" style="left:912.95px;top:12.10px;width:1px;height:27.50px"></div>
<div class="gl" style="left:912.95px;top:91.90px;width:1px;height:482.80px"></div>
<div class="gl" style="left:19.00px;top:26.80px;width:942.20px;height:1px"></div>
<div class="a" style="left:0;top:26.80px;width:19.00px;height:1px;background:#a8b6c8"></div>
<div class="gl" style="left:19.00px;top:39.10px;width:942.20px;height:1px"></div>
<div class="a" style="left:0;top:39.10px;width:19.00px;height:1px;background:#a8b6c8"></div>
<div class="gl" style="left:19.00px;top:57.30px;width:942.20px;height:1px"></div>
<div class="a" style="left:0;top:57.30px;width:19.00px;height:1px;background:#a8b6c8"></div>
<div class="gl" style="left:19.00px;top:91.40px;width:942.20px;height:1px"></div>
<div class="a" style="left:0;top:91.40px;width:19.00px;height:1px;background:#a8b6c8"></div>
<div class="gl" style="left:19.00px;top:104.01px;width:942.20px;height:1px"></div>
<div class="a" style="left:0;top:104.01px;width:19.00px;height:1px;background:#a8b6c8"></div>
<div class="gl" style="left:19.00px;top:116.92px;width:942.20px;height:1px"></div>
<div class="a" style="left:0;top:116.92px;width:19.00px;height:1px;background:#a8b6c8"></div>
<div class="gl" style="left:19.00px;top:129.53px;width:942.20px;height:1px"></div>
<div class="a" style="left:0;top:129.53px;width:19.00px;height:1px;background:#a8b6c8"></div>
<div class="gl" style="left:19.00px;top:142.14px;width:942.20px;height:1px"></div>
<div class="a" style="left:0;top:142.14px;width:19.00px;height:1px;background:#a8b6c8"></div>
<div class="gl" style="left:19.00px;top:154.75px;width:942.20px;height:1px"></div>
<div class="a" style="left:0;top:154.75px;width:19.00px;height:1px;background:#a8b6c8"></div>
<div class="gl" style="left:19.00px;top:167.36px;width:942.20px;height:1px"></div>
<div class="a" style="left:0;top:167.36px;width:19.00px;height:1px;background:#a8b6c8"></div>
<div class="gl" style="left:19.00px;top:179.97px;width:942.20px;height:1px"></div>
<div class="a" style="left:0;top:179.97px;width:19.00px;height:1px;background:#a8b6c8"></div>
<div class="gl" style="left:19.00px;top:192.58px;width:942.20px;height:1px"></div>
<div class="a" style="left:0;top:192.58px;width:19.00px;height:1px;background:#a8b6c8"></div>
<div class="gl" style="left:19.00px;top:205.19px;width:942.20px;height:1px"></div>
<div class="a" style="left:0;top:205.19px;width:19.00px;height:1px;background:#a8b6c8"></div>
<div class="gl" style="left:19.00px;top:217.80px;width:942.20px;height:1px"></div>
<div class="a" style="left:0;top:217.80px;width:19.00px;height:1px;background:#a8b6c8"></div>
<div class="gl" style="left:19.00px;top:230.41px;width:942.20px;height:1px"></div>
<div class="a" style="left:0;top:230.41px;width:19.00px;height:1px;background:#a8b6c8"></div>
<div class="gl" style="left:19.00px;top:243.02px;width:942.20px;height:1px"></div>
<div class="a" style="left:0;top:243.02px;width:19.00px;height:1px;background:#a8b6c8"></div>
<div class="gl" style="left:19.00px;top:255.63px;width:942.20px;height:1px"></div>
<div class="a" style="left:0;top:255.63px;width:19.00px;height:1px;background:#a8b6c8"></div>
<div class="gl" style="left:19.00px;top:268.24px;width:942.20px;height:1px"></div>
<div class="a" style="left:0;top:268.24px;width:19.00px;height:1px;background:#a8b6c8"></div>
<div class="gl" style="left:19.00px;top:280.85px;width:942.20px;height:1px"></div>
<div class="a" style="left:0;top:280.85px;width:19.00px;height:1px;background:#a8b6c8"></div>
<div class="gl" style="left:19.00px;top:293.46px;width:942.20px;height:1px"></div>
<div class="a" style="left:0;top:293.46px;width:19.00px;height:1px;background:#a8b6c8"></div>
<div class="gl" style="left:19.00px;top:306.07px;width:942.20px;height:1px"></div>
<div class="a" style="left:0;top:306.07px;width:19.00px;height:1px;background:#a8b6c8"></div>
<div class="gl" style="left:19.00px;top:318.68px;width:942.20px;height:1px"></div>
<div class="a" style="left:0;top:318.68px;width:19.00px;height:1px;background:#a8b6c8"></div>
<div class="gl" style="left:19.00px;top:331.29px;width:942.20px;height:1px"></div>
<div class="a" style="left:0;top:331.29px;width:19.00px;height:1px;background:#a8b6c8"></div>
<div class="gl" style="left:19.00px;top:343.90px;width:942.20px;height:1px"></div>
<div class="a" style="left:0;top:343.90px;width:19.00px;height:1px;background:#a8b6c8"></div>
<div class="gl" style="left:19.00px;top:356.51px;width:942.20px;height:1px"></div>
<div class="a" style="left:0;top:356.51px;width:19.00px;height:1px;background:#a8b6c8"></div>
<div class="gl" style="left:19.00px;top:369.12px;width:942.20px;height:1px"></div>
<div class="a" style="left:0;top:369.12px;width:19.00px;height:1px;background:#a8b6c8"></div>
<div class="gl" style="left:19.00px;top:381.73px;width:942.20px;height:1px"></div>
<div class="a" style="left:0;top:381.73px;width:19.00px;height:1px;background:#a8b6c8"></div>
<div class="gl" style="left:19.00px;top:394.34px;width:942.20px;height:1px"></div>
<div class="a" style="left:0;top:394.34px;width:19.00px;height:1px;background:#a8b6c8"></div>
<div class="gl" style="left:19.00px;top:406.95px;width:942.20px;height:1px"></div>
<div class="a" style="left:0;top:406.95px;width:19.00px;height:1px;background:#a8b6c8"></div>
<div class="gl" style="left:19.00px;top:419.56px;width:942.20px;height:1px"></div>
<div class="a" style="left:0;top:419.56px;width:19.00px;height:1px;background:#a8b6c8"></div>
<div class="gl" style="left:19.00px;top:432.17px;width:942.20px;height:1px"></div>
<div class="a" style="left:0;top:432.17px;width:19.00px;height:1px;background:#a8b6c8"></div>
<div class="gl" style="left:19.00px;top:444.78px;width:942.20px;height:1px"></div>
<div class="a" style="left:0;top:444.78px;width:19.00px;height:1px;background:#a8b6c8"></div>
<div class="gl" style="left:19.00px;top:457.39px;width:942.20px;height:1px"></div>
<div class="a" style="left:0;top:457.39px;width:19.00px;height:1px;background:#a8b6c8"></div>
<div class="gl" style="left:19.00px;top:470.00px;width:942.20px;height:1px"></div>
<div class="a" style="left:0;top:470.00px;width:19.00px;height:1px;background:#a8b6c8"></div>
<div class="gl" style="left:19.00px;top:482.61px;width:942.20px;height:1px"></div>
<div class="a" style="left:0;top:482.61px;width:19.00px;height:1px;background:#a8b6c8"></div>
<div class="gl" style="left:19.00px;top:495.22px;width:942.20px;height:1px"></div>
<div class="a" style="left:0;top:495.22px;width:19.00px;height:1px;background:#a8b6c8"></div>
<div class="gl" style="left:19.00px;top:507.83px;width:942.20px;height:1px"></div>
<div class="a" style="left:0;top:507.83px;width:19.00px;height:1px;background:#a8b6c8"></div>
<div class="gl" style="left:19.00px;top:520.44px;width:942.20px;height:1px"></div>
<div class="a" style="left:0;top:520.44px;width:19.00px;height:1px;background:#a8b6c8"></div>
<div class="gl" style="left:19.00px;top:533.05px;width:942.20px;height:1px"></div>
<div class="a" style="left:0;top:533.05px;width:19.00px;height:1px;background:#a8b6c8"></div>
<div class="gl" style="left:19.00px;top:545.66px;width:942.20px;height:1px"></div>
<div class="a" style="left:0;top:545.66px;width:19.00px;height:1px;background:#a8b6c8"></div>
<div class="gl" style="left:19.00px;top:558.27px;width:942.20px;height:1px"></div>
<div class="a" style="left:0;top:558.27px;width:19.00px;height:1px;background:#a8b6c8"></div>
<div class="gl" style="left:19.00px;top:570.88px;width:942.20px;height:1px"></div>
<div class="a" style="left:0;top:570.88px;width:19.00px;height:1px;background:#a8b6c8"></div>
<div class="gl" style="left:19.00px;top:583.49px;width:942.20px;height:1px"></div>
<div class="a" style="left:0;top:583.49px;width:19.00px;height:1px;background:#a8b6c8"></div>
<div class="a" style="left:18.50px;top:0px;width:1px;height:12.60px;background:#bdc7d4"></div>
<div class="a" style="left:25.50px;top:0px;width:1px;height:12.60px;background:#bdc7d4"></div>
<div class="a" style="left:33.40px;top:0px;width:1px;height:12.60px;background:#bdc7d4"></div>
<div class="a" style="left:40.80px;top:0px;width:1px;height:12.60px;background:#bdc7d4"></div>
<div class="a" style="left:122.20px;top:0px;width:1px;height:12.60px;background:#bdc7d4"></div>
<div class="a" style="left:137.80px;top:0px;width:1px;height:12.60px;background:#bdc7d4"></div>
<div class="a" style="left:244.70px;top:0px;width:1px;height:12.60px;background:#bdc7d4"></div>
<div class="a" style="left:252.20px;top:0px;width:1px;height:12.60px;background:#bdc7d4"></div>
<div class="a" style="left:260.20px;top:0px;width:1px;height:12.60px;background:#bdc7d4"></div>
<div class="a" style="left:267.20px;top:0px;width:1px;height:12.60px;background:#bdc7d4"></div>
<div class="a" style="left:274.70px;top:0px;width:1px;height:12.60px;background:#bdc7d4"></div>
<div class="a" style="left:306.20px;top:0px;width:1px;height:12.60px;background:#bdc7d4"></div>
<div class="a" style="left:414.70px;top:0px;width:1px;height:12.60px;background:#bdc7d4"></div>
<div class="a" style="left:518.45px;top:0px;width:1px;height:12.60px;background:#bdc7d4"></div>
<div class="a" style="left:590.95px;top:0px;width:1px;height:12.60px;background:#bdc7d4"></div>
<div class="a" style="left:665.45px;top:0px;width:1px;height:12.60px;background:#bdc7d4"></div>
<div class="a" style="left:710.45px;top:0px;width:1px;height:12.60px;background:#bdc7d4"></div>
<div class="a" style="left:748.70px;top:0px;width:1px;height:12.60px;background:#bdc7d4"></div>
<div class="a" style="left:787.45px;top:0px;width:1px;height:12.60px;background:#bdc7d4"></div>
<div class="a" style="left:825.95px;top:0px;width:1px;height:12.60px;background:#bdc7d4"></div>
<div class="a" style="left:835.95px;top:0px;width:1px;height:12.60px;background:#bdc7d4"></div>
<div class="a" style="left:912.95px;top:0px;width:1px;height:12.60px;background:#bdc7d4"></div>
<div class="a" style="left:18.50px;top:0;width:1px;height:574.70px;background:#9aaabe"></div>
<div class="a" style="left:41.30px;top:12.10px;width:81.40px;height:15.20px;background:#000"></div>
<div class="a" style="left:415.20px;top:39.60px;width:176.25px;height:18.20px;background:#dce6f2"></div>
<div class="a" style="left:836.45px;top:39.60px;width:154.00px;height:18.20px;background:#dce6f2"></div>
<div class="a" style="left:41.30px;top:57.80px;width:785.15px;height:34.10px;background:#a6a6a6"></div>
<div class="a" style="left:836.45px;top:57.80px;width:154.00px;height:34.10px;background:#a6a6a6"></div>
<div class="ch" style="left:19.00px;top:0.30px;width:7.00px">A</div>
<div class="ch" style="left:26.00px;top:0.30px;width:7.90px">B</div>
<div class="ch" style="left:33.90px;top:0.30px;width:7.40px">C</div>
<div class="ch" style="left:41.30px;top:0.30px;width:81.40px">D</div>
<div class="ch" style="left:122.70px;top:0.30px;width:15.60px">E</div>
<div class="ch" style="left:138.30px;top:0.30px;width:106.90px">F</div>
<div class="ch" style="left:245.20px;top:0.30px;width:7.50px">G</div>
<div class="ch" style="left:252.70px;top:0.30px;width:8.00px">H</div>
<div class="ch" style="left:260.70px;top:0.30px;width:7.00px">I</div>
<div class="ch" style="left:267.70px;top:0.30px;width:7.50px">J</div>
<div class="ch" style="left:275.20px;top:0.30px;width:31.50px">K</div>
<div class="ch" style="left:306.70px;top:0.30px;width:108.50px">L</div>
<div class="ch" style="left:415.20px;top:0.30px;width:103.75px">M</div>
<div class="ch" style="left:518.95px;top:0.30px;width:72.50px">N</div>
<div class="ch" style="left:591.45px;top:0.30px;width:74.50px">O</div>
<div class="ch" style="left:665.95px;top:0.30px;width:45.00px">P</div>
<div class="ch" style="left:710.95px;top:0.30px;width:38.25px">Q</div>
<div class="ch" style="left:749.20px;top:0.30px;width:38.75px">R</div>
<div class="ch" style="left:787.95px;top:0.30px;width:38.50px">S</div>
<div class="ch" style="left:826.45px;top:0.30px;width:10.00px">T</div>
<div class="ch" style="left:836.45px;top:0.30px;width:77.00px">U</div>
<div class="ch" style="left:913.45px;top:0.30px;width:77.00px">V</div>
<div class="rh" style="left:0;top:15.50px;width:19.00px;line-height:11px">1</div>
<div class="rh" style="left:0;top:27.80px;width:19.00px;line-height:11px">2</div>
<div class="rh" style="left:0;top:46.00px;width:19.00px;line-height:11px">3</div>
<div class="rh" style="left:0;top:80.10px;width:19.00px;line-height:11px">4</div>
<div class="rh" style="left:0;top:92.71px;width:19.00px;line-height:11px">5</div>
<div class="rh" style="left:0;top:105.62px;width:19.00px;line-height:11px">6</div>
<div class="rh" style="left:0;top:118.23px;width:19.00px;line-height:11px">7</div>
<div class="rh" style="left:0;top:130.84px;width:19.00px;line-height:11px">8</div>
<div class="rh" style="left:0;top:143.45px;width:19.00px;line-height:11px">9</div>
<div class="rh" style="left:0;top:156.06px;width:19.00px;line-height:11px">10</div>
<div class="rh" style="left:0;top:168.67px;width:19.00px;line-height:11px">11</div>
<div class="rh" style="left:0;top:181.28px;width:19.00px;line-height:11px">12</div>
<div class="rh" style="left:0;top:193.89px;width:19.00px;line-height:11px">13</div>
<div class="rh" style="left:0;top:206.50px;width:19.00px;line-height:11px">14</div>
<div class="rh" style="left:0;top:219.11px;width:19.00px;line-height:11px">15</div>
<div class="rh" style="left:0;top:231.72px;width:19.00px;line-height:11px">16</div>
<div class="rh" style="left:0;top:244.33px;width:19.00px;line-height:11px">17</div>
<div class="rh" style="left:0;top:256.94px;width:19.00px;line-height:11px">18</div>
<div class="rh" style="left:0;top:269.55px;width:19.00px;line-height:11px">19</div>
<div class="rh" style="left:0;top:282.16px;width:19.00px;line-height:11px">20</div>
<div class="rh" style="left:0;top:294.77px;width:19.00px;line-height:11px">21</div>
<div class="rh" style="left:0;top:307.38px;width:19.00px;line-height:11px">22</div>
<div class="rh" style="left:0;top:319.99px;width:19.00px;line-height:11px">23</div>
<div class="rh" style="left:0;top:332.60px;width:19.00px;line-height:11px">24</div>
<div class="rh" style="left:0;top:345.21px;width:19.00px;line-height:11px">25</div>
<div class="rh" style="left:0;top:357.82px;width:19.00px;line-height:11px">26</div>
<div class="rh" style="left:0;top:370.43px;width:19.00px;line-height:11px">27</div>
<div class="rh" style="left:0;top:383.04px;width:19.00px;line-height:11px">28</div>
<div class="rh" style="left:0;top:395.65px;width:19.00px;line-height:11px">29</div>
<div class="rh" style="left:0;top:408.26px;width:19.00px;line-height:11px">30</div>
<div class="rh" style="left:0;top:420.87px;width:19.00px;line-height:11px">31</div>
<div class="rh" style="left:0;top:433.48px;width:19.00px;line-height:11px">32</div>
<div class="rh" style="left:0;top:446.09px;width:19.00px;line-height:11px">33</div>
<div class="rh" style="left:0;top:458.70px;width:19.00px;line-height:11px">34</div>
<div class="rh" style="left:0;top:471.31px;width:19.00px;line-height:11px">35</div>
<div class="rh" style="left:0;top:483.92px;width:19.00px;line-height:11px">36</div>
<div class="rh" style="left:0;top:496.53px;width:19.00px;line-height:11px">37</div>
<div class="rh" style="left:0;top:509.14px;width:19.00px;line-height:11px">38</div>
<div class="rh" style="left:0;top:521.75px;width:19.00px;line-height:11px">39</div>
<div class="rh" style="left:0;top:534.36px;width:19.00px;line-height:11px">40</div>
<div class="rh" style="left:0;top:546.97px;width:19.00px;line-height:11px">41</div>
<div class="rh" style="left:0;top:559.58px;width:19.00px;line-height:11px">42</div>
<div class="rh" style="left:0;top:572.19px;width:19.00px;line-height:11px">43</div>
<div class="t b" style="left:42.80px;top:92.51px;width:79.90px">ID:</div>
<div class="t" style="left:139.80px;top:92.51px;width:105.40px">Culpp1</div>
<div class="t" style="left:275.20px;top:92.51px;width:31.50px;text-align:center">1</div>
<div class="t" style="left:308.20px;top:92.51px;width:107.00px">SM_ID</div>
<div class="t" style="left:416.70px;top:92.51px;width:102.25px">M!</div>
<div class="t" style="left:520.45px;top:92.51px;width:71.00px">M!</div>
<div class="t" style="left:592.95px;top:92.51px;width:73.00px">Individual ID</div>
<div class="t b" style="left:42.80px;top:105.42px;width:79.90px">Type:</div>
<div class="t" style="left:139.80px;top:105.42px;width:112.90px">Col2Col - w/wo aging</div>
<div class="t" style="left:275.20px;top:105.42px;width:31.50px;text-align:center">2</div>
<div class="t" style="left:308.20px;top:105.42px;width:107.00px">SM_CID</div>
<div class="t" style="left:416.70px;top:105.42px;width:102.25px">M!</div>
<div class="t" style="left:520.45px;top:105.42px;width:71.00px">M!</div>
<div class="t" style="left:592.95px;top:105.42px;width:118.00px">COS Job Code</div>
<div class="t b" style="left:42.80px;top:118.03px;width:79.90px">Name:</div>
<div class="t" style="left:139.80px;top:118.03px;width:105.40px">Culpepper schema 1</div>
<div class="t" style="left:275.20px;top:118.03px;width:31.50px;text-align:center">3</div>
<div class="t" style="left:308.20px;top:118.03px;width:107.00px">SM_CJL</div>
<div class="t" style="left:416.70px;top:118.03px;width:102.25px">M!</div>
<div class="t" style="left:520.45px;top:118.03px;width:71.00px">M!</div>
<div class="t" style="left:592.95px;top:118.03px;width:118.00px">COS Job Level</div>
<div class="t b" style="left:42.80px;top:130.64px;width:95.50px">Survey Company:</div>
<div class="t" style="left:139.80px;top:130.64px;width:105.40px">Culpepper</div>
<div class="t" style="left:275.20px;top:130.64px;width:31.50px;text-align:center">4</div>
<div class="t" style="left:308.20px;top:130.64px;width:107.00px">SM_SID</div>
<div class="t" style="left:416.70px;top:130.64px;width:102.25px">M!</div>
<div class="t" style="left:520.45px;top:130.64px;width:71.00px">Job Code</div>
<div class="t" style="left:592.95px;top:130.64px;width:156.25px">Survey Unique Job Code</div>
<div class="t" style="left:914.95px;top:130.64px;width:75.50px">Job Code</div>
<div class="t b" style="left:42.80px;top:143.25px;width:95.50px">Descriptions::</div>
<div class="t" style="left:139.80px;top:143.25px;width:135.40px">Culpepper schema 1 - regular - rules</div>
<div class="t" style="left:275.20px;top:143.25px;width:31.50px;text-align:center">5</div>
<div class="t" style="left:308.20px;top:143.25px;width:107.00px">SM_SID_2</div>
<div class="t" style="left:416.70px;top:143.25px;width:102.25px">M!</div>
<div class="t" style="left:520.45px;top:143.25px;width:71.00px">Job Code Range</div>
<div class="t" style="left:592.95px;top:143.25px;width:118.00px">Job Code Range</div>
<div class="t" style="left:914.95px;top:143.25px;width:75.50px">Job Code Range</div>
<div class="t b" style="left:42.80px;top:155.86px;width:95.50px">1st col in Survey sheet</div>
<div class="t" style="left:139.80px;top:155.86px;width:105.40px">A2</div>
<div class="t" style="left:275.20px;top:155.86px;width:31.50px;text-align:center">6</div>
<div class="t" style="left:308.20px;top:155.86px;width:107.00px">SM_SJL</div>
<div class="t" style="left:416.70px;top:155.86px;width:102.25px">M!</div>
<div class="t" style="left:520.45px;top:155.86px;width:71.00px">Culpepper Job Title</div>
<div class="t" style="left:592.95px;top:155.86px;width:118.00px">Survey Job Title</div>
<div class="t" style="left:914.95px;top:155.86px;width:75.50px">Culpepper Job Title</div>
<div class="t b" style="left:42.80px;top:168.47px;width:95.50px">Title Row in Survey sheet</div>
<div class="t" style="left:139.80px;top:168.47px;width:105.40px">2</div>
<div class="t" style="left:275.20px;top:168.47px;width:31.50px;text-align:center">7</div>
<div class="t" style="left:308.20px;top:168.47px;width:107.00px">SM_SJL_2</div>
<div class="t" style="left:416.70px;top:168.47px;width:102.25px">M!</div>
<div class="t" style="left:520.45px;top:168.47px;width:71.00px">Job Level Combination</div>
<div class="t" style="left:592.95px;top:168.47px;width:118.00px">Job Level Combination</div>
<div class="t" style="left:914.95px;top:168.47px;width:75.50px">Job Level Combination</div>
<div class="t b" style="left:42.80px;top:181.08px;width:79.90px">Save to:</div>
<div class="t" style="left:139.80px;top:181.08px;width:105.40px">Template Culp1.xlsx</div>
<div class="t" style="left:275.20px;top:181.08px;width:31.50px;text-align:center">8</div>
<div class="t" style="left:308.20px;top:181.08px;width:107.00px">SM_DataSource</div>
<div class="t" style="left:416.70px;top:181.08px;width:102.25px">M!</div>
<div class="t" style="left:520.45px;top:181.08px;width:71.00px">Data Source</div>
<div class="t" style="left:592.95px;top:181.08px;width:73.00px">Data Source</div>
<div class="t" style="left:914.95px;top:181.08px;width:75.50px">Data Source</div>
<div class="t" style="left:275.20px;top:193.69px;width:31.50px;text-align:center">9</div>
<div class="t" style="left:308.20px;top:193.69px;width:107.00px">SM_DataCut</div>
<div class="t" style="left:416.70px;top:193.69px;width:102.25px">M!</div>
<div class="t" style="left:520.45px;top:193.69px;width:71.00px">Data Cuts</div>
<div class="t" style="left:592.95px;top:193.69px;width:73.00px">Data Cuts</div>
<div class="t" style="left:914.95px;top:193.69px;width:75.50px">Data Cuts</div>
<div class="t b" style="left:42.80px;top:206.30px;width:202.40px">Effective Date Current Year</div>
<div class="t" style="left:275.20px;top:206.30px;width:31.50px;text-align:center">10</div>
<div class="t" style="left:308.20px;top:206.30px;width:107.00px">SM_CutFilter</div>
<div class="t" style="left:416.70px;top:206.30px;width:102.25px">M!</div>
<div class="t" style="left:520.45px;top:206.30px;width:71.00px">Data Cut Filter</div>
<div class="t" style="left:592.95px;top:206.30px;width:118.00px">Data Cut Filter</div>
<div class="t" style="left:914.95px;top:206.30px;width:75.50px">Data Cut Filter</div>
<div class="t b" style="left:42.80px;top:218.91px;width:202.40px">Effective Date Prior Year</div>
<div class="t" style="left:275.20px;top:218.91px;width:31.50px;text-align:center">11</div>
<div class="t" style="left:308.20px;top:218.91px;width:107.00px">SM_IncFilter</div>
<div class="t" style="left:416.70px;top:218.91px;width:102.25px">M!</div>
<div class="t" style="left:520.45px;top:218.91px;width:71.00px">Incumbent Filter</div>
<div class="t" style="left:592.95px;top:218.91px;width:118.00px">Incumbent Filter</div>
<div class="t" style="left:914.95px;top:218.91px;width:75.50px">Incumbent Filter</div>
<div class="t b" style="left:42.80px;top:231.52px;width:79.90px">Aged?</div>
<div class="t" style="left:139.80px;top:231.52px;width:105.40px">1</div>
<div class="t" style="left:275.20px;top:231.52px;width:31.50px;text-align:center">16</div>
<div class="t" style="left:308.20px;top:231.52px;width:107.00px">SM_Bas10_Now</div>
<div class="t" style="left:416.70px;top:231.52px;width:102.25px">Base Salary (Current Year)</div>
<div class="t" style="left:520.45px;top:231.52px;width:71.00px">Base Salary (Current Year)</div>
<div class="t" style="left:592.95px;top:231.52px;width:156.25px">Base Salary 10th %tile (1,000&#x27;s)</div>
<div class="t" style="left:750.70px;top:231.52px;width:37.25px">$0.00</div>
<div class="t" style="left:789.45px;top:231.52px;width:37.00px">1000</div>
<div class="t" style="left:837.95px;top:231.52px;width:75.50px">Base Salary {yy}</div>
<div class="t" style="left:914.95px;top:231.52px;width:75.50px">Base Salary</div>
<div class="t b" style="left:42.80px;top:244.13px;width:79.90px">Aged to date:</div>
<div class="t" style="left:139.80px;top:244.13px;width:105.40px">10/26/2010</div>
<div class="t" style="left:275.20px;top:244.13px;width:31.50px;text-align:center">17</div>
<div class="t" style="left:308.20px;top:244.13px;width:107.00px">SM_Bas25_Now</div>
<div class="t" style="left:416.70px;top:244.13px;width:102.25px">Base Salary (Current Year)</div>
<div class="t" style="left:520.45px;top:244.13px;width:71.00px">Base Salary (Current Year)</div>
<div class="t" style="left:592.95px;top:244.13px;width:156.25px">Base Salary 25th %tile (1,000&#x27;s)</div>
<div class="t" style="left:750.70px;top:244.13px;width:37.25px">$0.00</div>
<div class="t" style="left:789.45px;top:244.13px;width:37.00px">1000</div>
<div class="t" style="left:837.95px;top:244.13px;width:75.50px">Base Salary {yy}</div>
<div class="t" style="left:914.95px;top:244.13px;width:75.50px">Base Salary</div>
<div class="t b" style="left:42.80px;top:256.74px;width:79.90px"># Months</div>
<div class="t" style="left:275.20px;top:256.74px;width:31.50px;text-align:center">18</div>
<div class="t" style="left:308.20px;top:256.74px;width:107.00px">SM_Bas50_Now</div>
<div class="t" style="left:416.70px;top:256.74px;width:102.25px">Base Salary (Current Year)</div>
<div class="t" style="left:520.45px;top:256.74px;width:71.00px">Base Salary (Current Year)</div>
<div class="t" style="left:592.95px;top:256.74px;width:156.25px">Base Salary 50th %tile (1,000&#x27;s)</div>
<div class="t" style="left:750.70px;top:256.74px;width:37.25px">$0.00</div>
<div class="t" style="left:789.45px;top:256.74px;width:37.00px">1000</div>
<div class="t" style="left:837.95px;top:256.74px;width:75.50px">Base Salary {yy}</div>
<div class="t" style="left:914.95px;top:256.74px;width:75.50px">Base Salary</div>
<div class="t b" style="left:42.80px;top:269.35px;width:79.90px">Current year:</div>
<div class="t" style="left:124.20px;top:269.35px;width:14.10px">_Now</div>
<div class="t" style="left:139.80px;top:269.35px;width:105.40px">(Current Year)</div>
<div class="t" style="left:275.20px;top:269.35px;width:31.50px;text-align:center">19</div>
<div class="t" style="left:308.20px;top:269.35px;width:107.00px">SM_BasAvg_Now</div>
<div class="t" style="left:416.70px;top:269.35px;width:102.25px">Base Salary (Current Year)</div>
<div class="t" style="left:520.45px;top:269.35px;width:71.00px">Base Salary (Current Year)</div>
<div class="t" style="left:592.95px;top:269.35px;width:156.25px">Base Salary Average or Mean (1,000&#x27;s)</div>
<div class="t" style="left:750.70px;top:269.35px;width:37.25px">$0.00</div>
<div class="t" style="left:789.45px;top:269.35px;width:37.00px">1000</div>
<div class="t" style="left:837.95px;top:269.35px;width:75.50px">Base Salary {yy}</div>
<div class="t" style="left:914.95px;top:269.35px;width:75.50px">Base Salary</div>
<div class="t b" style="left:42.80px;top:281.96px;width:79.90px">Prior year:</div>
<div class="t" style="left:124.20px;top:281.96px;width:14.10px">_Last</div>
<div class="t" style="left:139.80px;top:281.96px;width:105.40px">(Prior Year)</div>
<div class="t" style="left:275.20px;top:281.96px;width:31.50px;text-align:center">20</div>
<div class="t" style="left:308.20px;top:281.96px;width:107.00px">SM_Bas75_Now</div>
<div class="t" style="left:416.70px;top:281.96px;width:102.25px">Base Salary (Current Year)</div>
<div class="t" style="left:520.45px;top:281.96px;width:71.00px">Base Salary (Current Year)</div>
<div class="t" style="left:592.95px;top:281.96px;width:156.25px">Base Salary 75th %tile (1,000&#x27;s)</div>
<div class="t" style="left:750.70px;top:281.96px;width:37.25px">$0.00</div>
<div class="t" style="left:789.45px;top:281.96px;width:37.00px">1000</div>
<div class="t" style="left:837.95px;top:281.96px;width:75.50px">Base Salary {yy}</div>
<div class="t" style="left:914.95px;top:281.96px;width:75.50px">Base Salary</div>
<div class="t" style="left:275.20px;top:294.57px;width:31.50px;text-align:center">21</div>
<div class="t" style="left:308.20px;top:294.57px;width:107.00px">SM_Bas90_Now</div>
<div class="t" style="left:416.70px;top:294.57px;width:102.25px">Base Salary (Current Year)</div>
<div class="t" style="left:520.45px;top:294.57px;width:71.00px">Base Salary (Current Year)</div>
<div class="t" style="left:592.95px;top:294.57px;width:156.25px">Base Salary 90th %tile (1,000&#x27;s)</div>
<div class="t" style="left:750.70px;top:294.57px;width:37.25px">$0.00</div>
<div class="t" style="left:789.45px;top:294.57px;width:37.00px">1000</div>
<div class="t" style="left:837.95px;top:294.57px;width:75.50px">Base Salary {yy}</div>
<div class="t" style="left:914.95px;top:294.57px;width:75.50px">Base Salary</div>
<div class="t b" style="left:42.80px;top:307.18px;width:79.90px">$ Math factor</div>
<div class="t" style="left:139.80px;top:307.18px;width:105.40px">1000</div>
<div class="t" style="left:275.20px;top:307.18px;width:31.50px;text-align:center">53</div>
<div class="t" style="left:308.20px;top:307.18px;width:107.00px">SM_BasTC10_Now</div>
<div class="t" style="left:416.70px;top:307.18px;width:102.25px">M!</div>
<div class="t" style="left:520.45px;top:307.18px;width:71.00px">M!</div>
<div class="t" style="left:592.95px;top:307.18px;width:195.00px">Base as a % of Total Cash 10th %ile</div>
<div class="t b" style="left:42.80px;top:319.79px;width:79.90px">$ field format</div>
<div class="t" style="left:139.80px;top:319.79px;width:105.40px">$0.00</div>
<div class="t" style="left:275.20px;top:319.79px;width:31.50px;text-align:center">54</div>
<div class="t" style="left:308.20px;top:319.79px;width:107.00px">SM_BasTC25_Now</div>
<div class="t" style="left:416.70px;top:319.79px;width:102.25px">M!</div>
<div class="t" style="left:520.45px;top:319.79px;width:71.00px">M!</div>
<div class="t" style="left:592.95px;top:319.79px;width:195.00px">Base as a % of Total Cash 25th %ile</div>
<div class="t" style="left:275.20px;top:332.40px;width:31.50px;text-align:center">55</div>
<div class="t" style="left:308.20px;top:332.40px;width:107.00px">SM_BasTC50_Now</div>
<div class="t" style="left:416.70px;top:332.40px;width:102.25px">M!</div>
<div class="t" style="left:520.45px;top:332.40px;width:71.00px">M!</div>
<div class="t" style="left:592.95px;top:332.40px;width:195.00px">Base as a % of Total Cash 50th %ile</div>
<div class="t" style="left:42.80px;top:345.01px;width:95.50px">Global aging factor</div>
<div class="t" style="left:275.20px;top:345.01px;width:31.50px;text-align:center">56</div>
<div class="t" style="left:308.20px;top:345.01px;width:107.00px">SM_BasTCAvg_Now</div>
<div class="t" style="left:416.70px;top:345.01px;width:102.25px">M!</div>
<div class="t" style="left:520.45px;top:345.01px;width:71.00px">M!</div>
<div class="t" style="left:592.95px;top:345.01px;width:195.00px">Base as a % of Total Cash Average</div>
<div class="t" style="left:275.20px;top:357.62px;width:31.50px;text-align:center">57</div>
<div class="t" style="left:308.20px;top:357.62px;width:107.00px">SM_BasTC75_Now</div>
<div class="t" style="left:416.70px;top:357.62px;width:102.25px">M!</div>
<div class="t" style="left:520.45px;top:357.62px;width:71.00px">M!</div>
<div class="t" style="left:592.95px;top:357.62px;width:195.00px">Base as a % of Total Cash 75th %ile</div>
<div class="t" style="left:275.20px;top:370.23px;width:31.50px;text-align:center">58</div>
<div class="t" style="left:308.20px;top:370.23px;width:107.00px">SM_BasTC90_Now</div>
<div class="t" style="left:416.70px;top:370.23px;width:102.25px">M!</div>
<div class="t" style="left:520.45px;top:370.23px;width:71.00px">M!</div>
<div class="t" style="left:592.95px;top:370.23px;width:195.00px">Base as a % of Total Cash 90th %ile</div>
<div class="t" style="left:275.20px;top:382.84px;width:31.50px;text-align:center">108</div>
<div class="t" style="left:308.20px;top:382.84px;width:107.00px">SM_Bas10_Last</div>
<div class="t" style="left:416.70px;top:382.84px;width:102.25px">Base Salary (Prior Year)</div>
<div class="t" style="left:520.45px;top:382.84px;width:71.00px">Base Salary (Prior Year)</div>
<div class="t" style="left:592.95px;top:382.84px;width:156.25px">Base Salary 10th %tile (1,000&#x27;s)</div>
<div class="t" style="left:750.70px;top:382.84px;width:37.25px">$0.00</div>
<div class="t" style="left:789.45px;top:382.84px;width:37.00px">1000</div>
<div class="t" style="left:837.95px;top:382.84px;width:75.50px">Base Salary {yy}</div>
<div class="t" style="left:914.95px;top:382.84px;width:75.50px">Base Salary</div>
<div class="t" style="left:275.20px;top:395.45px;width:31.50px;text-align:center">109</div>
<div class="t" style="left:308.20px;top:395.45px;width:107.00px">SM_Bas25_Last</div>
<div class="t" style="left:416.70px;top:395.45px;width:102.25px">Base Salary (Prior Year)</div>
<div class="t" style="left:520.45px;top:395.45px;width:71.00px">Base Salary (Prior Year)</div>
<div class="t" style="left:592.95px;top:395.45px;width:156.25px">Base Salary 25th %tile (1,000&#x27;s)</div>
<div class="t" style="left:750.70px;top:395.45px;width:37.25px">$0.00</div>
<div class="t" style="left:789.45px;top:395.45px;width:37.00px">1000</div>
<div class="t" style="left:837.95px;top:395.45px;width:75.50px">Base Salary {yy}</div>
<div class="t" style="left:914.95px;top:395.45px;width:75.50px">Base Salary</div>
<div class="t" style="left:275.20px;top:408.06px;width:31.50px;text-align:center">110</div>
<div class="t" style="left:308.20px;top:408.06px;width:107.00px">SM_Bas50_Last</div>
<div class="t" style="left:416.70px;top:408.06px;width:102.25px">Base Salary (Prior Year)</div>
<div class="t" style="left:520.45px;top:408.06px;width:71.00px">Base Salary (Prior Year)</div>
<div class="t" style="left:592.95px;top:408.06px;width:156.25px">Base Salary 50th %tile (1,000&#x27;s)</div>
<div class="t" style="left:750.70px;top:408.06px;width:37.25px">$0.00</div>
<div class="t" style="left:789.45px;top:408.06px;width:37.00px">1000</div>
<div class="t" style="left:837.95px;top:408.06px;width:75.50px">Base Salary {yy}</div>
<div class="t" style="left:914.95px;top:408.06px;width:75.50px">Base Salary</div>
<div class="t" style="left:275.20px;top:420.67px;width:31.50px;text-align:center">111</div>
<div class="t" style="left:308.20px;top:420.67px;width:107.00px">SM_BasAvg_Last</div>
<div class="t" style="left:416.70px;top:420.67px;width:102.25px">Base Salary (Prior Year)</div>
<div class="t" style="left:520.45px;top:420.67px;width:71.00px">Base Salary (Prior Year)</div>
<div class="t" style="left:592.95px;top:420.67px;width:156.25px">Base Salary Average or Mean (1,000&#x27;s)</div>
<div class="t" style="left:750.70px;top:420.67px;width:37.25px">$0.00</div>
<div class="t" style="left:789.45px;top:420.67px;width:37.00px">1000</div>
<div class="t" style="left:837.95px;top:420.67px;width:75.50px">Base Salary {yy}</div>
<div class="t" style="left:914.95px;top:420.67px;width:75.50px">Base Salary</div>
<div class="t" style="left:275.20px;top:433.28px;width:31.50px;text-align:center">112</div>
<div class="t" style="left:308.20px;top:433.28px;width:107.00px">SM_Bas75_Last</div>
<div class="t" style="left:416.70px;top:433.28px;width:102.25px">Base Salary (Prior Year)</div>
<div class="t" style="left:520.45px;top:433.28px;width:71.00px">Base Salary (Prior Year)</div>
<div class="t" style="left:592.95px;top:433.28px;width:156.25px">Base Salary 75th %tile (1,000&#x27;s)</div>
<div class="t" style="left:750.70px;top:433.28px;width:37.25px">$0.00</div>
<div class="t" style="left:789.45px;top:433.28px;width:37.00px">1000</div>
<div class="t" style="left:837.95px;top:433.28px;width:75.50px">Base Salary {yy}</div>
<div class="t" style="left:914.95px;top:433.28px;width:75.50px">Base Salary</div>
<div class="t" style="left:275.20px;top:445.89px;width:31.50px;text-align:center">113</div>
<div class="t" style="left:308.20px;top:445.89px;width:107.00px">SM_Bas90_Last</div>
<div class="t" style="left:416.70px;top:445.89px;width:102.25px">Base Salary (Prior Year)</div>
<div class="t" style="left:520.45px;top:445.89px;width:71.00px">Base Salary (Prior Year)</div>
<div class="t" style="left:592.95px;top:445.89px;width:156.25px">Base Salary 90th %tile (1,000&#x27;s)</div>
<div class="t" style="left:750.70px;top:445.89px;width:37.25px">$0.00</div>
<div class="t" style="left:789.45px;top:445.89px;width:37.00px">1000</div>
<div class="t" style="left:837.95px;top:445.89px;width:75.50px">Base Salary {yy}</div>
<div class="t" style="left:914.95px;top:445.89px;width:75.50px">Base Salary</div>
<div class="t" style="left:275.20px;top:458.50px;width:31.50px;text-align:center">144</div>
<div class="t" style="left:308.20px;top:458.50px;width:107.00px">SM_BasTC10_Last</div>
<div class="t" style="left:416.70px;top:458.50px;width:102.25px">Base as a % of Total Cash</div>
<div class="t" style="left:520.45px;top:458.50px;width:71.00px">Base as a % of Total Cash</div>
<div class="t" style="left:592.95px;top:458.50px;width:195.00px">Base as a % of Total Cash 10th %ile</div>
<div class="t" style="left:837.95px;top:458.50px;width:75.50px">Base as a % of Total Cash</div>
<div class="t" style="left:914.95px;top:458.50px;width:75.50px">Base as a %</div>
<div class="t" style="left:275.20px;top:471.11px;width:31.50px;text-align:center">145</div>
<div class="t" style="left:308.20px;top:471.11px;width:107.00px">SM_BasTC25_Last</div>
<div class="t" style="left:416.70px;top:471.11px;width:102.25px">Base as a % of Total Cash</div>
<div class="t" style="left:520.45px;top:471.11px;width:71.00px">Base as a % of Total Cash</div>
<div class="t" style="left:592.95px;top:471.11px;width:195.00px">Base as a % of Total Cash 25th %ile</div>
<div class="t" style="left:837.95px;top:471.11px;width:75.50px">Base as a % of Total Cash</div>
<div class="t" style="left:914.95px;top:471.11px;width:75.50px">Base as a %</div>
<div class="t" style="left:275.20px;top:483.72px;width:31.50px;text-align:center">146</div>
<div class="t" style="left:308.20px;top:483.72px;width:107.00px">SM_BasTC50_Last</div>
<div class="t" style="left:416.70px;top:483.72px;width:102.25px">Base as a % of Total Cash</div>
<div class="t" style="left:520.45px;top:483.72px;width:71.00px">Base as a % of Total Cash</div>
<div class="t" style="left:592.95px;top:483.72px;width:195.00px">Base as a % of Total Cash 50th %ile</div>
<div class="t" style="left:837.95px;top:483.72px;width:75.50px">Base as a % of Total Cash</div>
<div class="t" style="left:914.95px;top:483.72px;width:75.50px">Base as a %</div>
<div class="t" style="left:275.20px;top:496.33px;width:31.50px;text-align:center">147</div>
<div class="t" style="left:308.20px;top:496.33px;width:107.00px">SM_BasTCAvg_Last</div>
<div class="t" style="left:416.70px;top:496.33px;width:102.25px">Base as a % of Total Cash</div>
<div class="t" style="left:520.45px;top:496.33px;width:71.00px">Base as a % of Total Cash</div>
<div class="t" style="left:592.95px;top:496.33px;width:195.00px">Base as a % of Total Cash Average</div>
<div class="t" style="left:837.95px;top:496.33px;width:75.50px">Base as a % of Total Cash</div>
<div class="t" style="left:914.95px;top:496.33px;width:75.50px">Base as a %</div>
<div class="t" style="left:275.20px;top:508.94px;width:31.50px;text-align:center">148</div>
<div class="t" style="left:308.20px;top:508.94px;width:107.00px">SM_BasTC75_Last</div>
<div class="t" style="left:416.70px;top:508.94px;width:102.25px">Base as a % of Total Cash</div>
<div class="t" style="left:520.45px;top:508.94px;width:71.00px">Base as a % of Total Cash</div>
<div class="t" style="left:592.95px;top:508.94px;width:195.00px">Base as a % of Total Cash 75th %ile</div>
<div class="t" style="left:837.95px;top:508.94px;width:75.50px">Base as a % of Total Cash</div>
<div class="t" style="left:914.95px;top:508.94px;width:75.50px">Base as a %</div>
<div class="t" style="left:275.20px;top:521.55px;width:31.50px;text-align:center">149</div>
<div class="t" style="left:308.20px;top:521.55px;width:107.00px">SM_BasTC90_Last</div>
<div class="t" style="left:416.70px;top:521.55px;width:102.25px">Base as a % of Total Cash</div>
<div class="t" style="left:520.45px;top:521.55px;width:71.00px">Base as a % of Total Cash</div>
<div class="t" style="left:592.95px;top:521.55px;width:195.00px">Base as a % of Total Cash 90th %ile</div>
<div class="t" style="left:837.95px;top:521.55px;width:75.50px">Base as a % of Total Cash</div>
<div class="t" style="left:914.95px;top:521.55px;width:75.50px">Base as a %</div>
<div class="t" style="left:275.20px;top:534.16px;width:31.50px;text-align:center">284</div>
<div class="t" style="left:308.20px;top:534.16px;width:107.00px">SM_Cos_BR</div>
<div class="t" style="left:416.70px;top:534.16px;width:102.25px">Billing Rates Dataset</div>
<div class="t" style="left:520.45px;top:534.16px;width:71.00px">Number of Co&#x27;s</div>
<div class="t" style="left:592.95px;top:534.16px;width:118.00px">Number of Co&#x27;s</div>
<div class="t" style="left:837.95px;top:534.16px;width:75.50px">Billing Rates Dataset</div>
<div class="t" style="left:914.95px;top:534.16px;width:75.50px">Number of Co&#x27;s</div>
<div class="t" style="left:275.20px;top:546.77px;width:31.50px;text-align:center">285</div>
<div class="t" style="left:308.20px;top:546.77px;width:107.00px">SM_Inc_BR</div>
<div class="t" style="left:416.70px;top:546.77px;width:102.25px">Billing Rates Dataset</div>
<div class="t" style="left:520.45px;top:546.77px;width:71.00px">Number of Inc&#x27;s</div>
<div class="t" style="left:592.95px;top:546.77px;width:118.00px">Number of Incumbents</div>
<div class="t" style="left:837.95px;top:546.77px;width:75.50px">Billing Rates Dataset</div>
<div class="t" style="left:914.95px;top:546.77px;width:75.50px">Number of Inc&#x27;s</div>
<div class="t" style="left:275.20px;top:559.38px;width:31.50px;text-align:center">286</div>
<div class="t" style="left:308.20px;top:559.38px;width:107.00px">SM_AvgRev_BR</div>
<div class="t" style="left:416.70px;top:559.38px;width:102.25px">Billing Rates Dataset</div>
<div class="t" style="left:520.45px;top:559.38px;width:71.00px">Co&#x27;s Avg Revenue</div>
<div class="t" style="left:592.95px;top:559.38px;width:156.25px">Co&#x27;s Avg Revenue $ (USD M)</div>
<div class="t" style="left:837.95px;top:559.38px;width:75.50px">Billing Rates Dataset</div>
<div class="t" style="left:914.95px;top:559.38px;width:75.50px">Co&#x27;s Avg Revenue</div>
<div class="t" style="left:275.20px;top:571.99px;width:31.50px;text-align:center">287</div>
<div class="t" style="left:308.20px;top:571.99px;width:107.00px">SM_AvgInc_BR</div>
<div class="t" style="left:416.70px;top:571.99px;width:102.25px">Billing Rates Dataset</div>
<div class="t" style="left:520.45px;top:571.99px;width:71.00px">Co&#x27;s Avg Incumbents</div>
<div class="t" style="left:592.95px;top:571.99px;width:118.00px">Co&#x27;s Avg Incumbents</div>
<div class="t" style="left:837.95px;top:571.99px;width:75.50px">Billing Rates Dataset</div>
<div class="t" style="left:914.95px;top:571.99px;width:75.50px">Co&#x27;s Avg Inc</div>
<div class="t" style="left:41.30px;top:14.10px;width:81.40px;text-align:center;color:#fff;font-size:10.3px;letter-spacing:0">Map1</div>
<div class="a" style="left:364.70px;top:39.80px;width:277px;text-align:center;font-size:14.3px;font-weight:bold;font-style:italic;color:#111;line-height:18px;white-space:nowrap">Actual headers, do not touch</div>
<div class="a" style="left:836.45px;top:39.80px;width:154px;text-align:center;font-size:14.3px;font-weight:bold;color:#111;line-height:18px;white-space:nowrap">DB headers</div>
<div class="a" style="left:41.30px;top:57.80px;width:81.40px;height:34.10px;display:flex;align-items:center;justify-content:center;overflow:hidden"><div style="text-align:center;font-size:9.9px;font-weight:bold;color:#222;line-height:12.3px;white-space:nowrap;">Setting name</div></div>
<div class="a" style="left:138.30px;top:57.80px;width:106.90px;height:34.10px;display:flex;align-items:center;justify-content:center;overflow:hidden"><div style="text-align:center;font-size:9.9px;font-weight:bold;color:#222;line-height:12.3px;white-space:nowrap;">Setting Value</div></div>
<div class="a" style="left:275.20px;top:57.80px;width:31.50px;height:34.10px;display:flex;align-items:center;justify-content:center;overflow:hidden"><div style="text-align:center;font-size:9.9px;font-weight:bold;color:#222;line-height:12.3px;white-space:nowrap;position:relative;top:4px;line-height:12.6px;">ID<br>2011-<br>03-28</div></div>
<div class="a" style="left:306.70px;top:57.80px;width:108.50px;height:34.10px;display:flex;align-items:center;justify-content:center;overflow:hidden"><div style="text-align:center;font-size:9.9px;font-weight:bold;color:#222;line-height:12.3px;white-space:nowrap;">COS column code</div></div>
<div class="a" style="left:415.20px;top:57.80px;width:103.75px;height:34.10px;display:flex;align-items:center;justify-content:center;overflow:hidden"><div style="text-align:center;font-size:9.9px;font-weight:bold;color:#222;line-height:12.3px;white-space:nowrap;">Group column labels</div></div>
<div class="a" style="left:518.95px;top:57.80px;width:72.50px;height:34.10px;display:flex;align-items:center;justify-content:center;overflow:hidden"><div style="text-align:center;font-size:9.9px;font-weight:bold;color:#222;line-height:12.3px;white-space:nowrap;">Individual<br>Column labels</div></div>
<div class="a" style="left:591.45px;top:57.80px;width:74.50px;height:34.10px;display:flex;align-items:center;justify-content:center;overflow:hidden"><div style="text-align:center;font-size:9.9px;font-weight:bold;color:#222;line-height:12.3px;white-space:nowrap;">COS indivdual<br>column labels</div></div>
<div class="a" style="left:665.95px;top:57.80px;width:45.00px;height:34.10px;display:flex;align-items:center;justify-content:center;overflow:hidden"><div style="text-align:center;font-size:9.9px;font-weight:bold;color:#222;line-height:12.3px;white-space:nowrap;">Aging<br>factor</div></div>
<div class="a" style="left:710.95px;top:57.80px;width:38.25px;height:34.10px;display:flex;align-items:center;justify-content:center;overflow:hidden"><div style="text-align:center;font-size:9.9px;font-weight:bold;color:#222;line-height:12.3px;white-space:nowrap;">Flag</div></div>
<div class="a" style="left:749.20px;top:57.80px;width:38.75px;height:34.10px;display:flex;align-items:center;justify-content:center;overflow:hidden"><div style="text-align:center;font-size:9.9px;font-weight:bold;color:#222;line-height:12.3px;white-space:nowrap;">Data<br>type</div></div>
<div class="a" style="left:787.95px;top:57.80px;width:38.50px;height:34.10px;display:flex;align-items:center;justify-content:center;overflow:hidden"><div style="text-align:center;font-size:9.9px;font-weight:bold;color:#222;line-height:12.3px;white-space:nowrap;">Math<br>factor</div></div>
<div class="a" style="left:836.45px;top:57.80px;width:77.00px;height:34.10px;display:flex;align-items:center;justify-content:center;overflow:hidden"><div style="text-align:center;font-size:9.9px;font-weight:bold;color:#222;line-height:12.3px;white-space:nowrap;">Group column<br>labels</div></div>
<div class="a" style="left:913.45px;top:57.80px;width:77.00px;height:34.10px;display:flex;align-items:center;justify-content:center;overflow:hidden"><div style="text-align:center;font-size:9.9px;font-weight:bold;color:#222;line-height:12.3px;white-space:nowrap;">Individual<br>Column labels</div></div>
<div class="a" style="left:0;top:91.60px;width:976.5px;height:1.5px;background:#4a4a4a"></div>
<div class="a" style="left:136.70px;top:318.18px;width:109.50px;height:14.61px;border:2px solid #111"></div>
<div class="a" style="left:243.20px;top:329.79px;width:4px;height:4px;background:#111;border:1px solid #fff"></div>
</div>
<div class="a" style="left:976.5px;top:132.3px;width:10.3px;height:586px;background:linear-gradient(90deg,#9ab4da,#86a3cf)"></div>
<div class="a" style="left:976.5px;top:132.3px;width:10px;height:12px;background:linear-gradient(90deg,#b6cbe6,#9cb5d9)"></div>
<div class="a" style="left:979px;top:136px;border-left:3px solid transparent;border-right:3px solid transparent;border-bottom:3px solid #3d5c8c"></div>
<div class="a" style="left:977px;top:144.5px;width:9.5px;height:61px;background:linear-gradient(90deg,#f1f5fb,#dae5f3);border:1px solid #a8bcd8;border-radius:2px"></div>
<div class="a" style="left:979px;top:172px;width:5px;height:4px;border-top:1px solid #8ca0bc;border-bottom:1px solid #8ca0bc"></div>
<svg class="a" style="left:978.5px;top:699.5px" width="7" height="5"><path d="M0.5 0.5 L3.5 3.8 L6.5 0.5" fill="none" stroke="#2d4a78" stroke-width="1.6"/></svg>
<div class="a" style="left:15.3px;top:707px;width:961px;height:11.5px;background:linear-gradient(#d9e5f4,#c9daf0)"></div>
<div class="a" style="left:20px;top:709.5px;width:1px;height:6px;background:#2d4a78"></div>
<div class="a" style="left:21px;top:709.5px;border-top:3px solid transparent;border-bottom:3px solid transparent;border-right:3px solid #2d4a78"></div>
<div class="a" style="left:31px;top:709.5px;border-top:3px solid transparent;border-bottom:3px solid transparent;border-right:3px solid #2d4a78"></div>
<div class="a" style="left:40px;top:709.5px;border-top:3px solid transparent;border-bottom:3px solid transparent;border-left:3px solid #2d4a78"></div>
<div class="a" style="left:49px;top:709.5px;border-top:3px solid transparent;border-bottom:3px solid transparent;border-left:3px solid #2d4a78"></div>
<div class="a" style="left:52px;top:709.5px;width:1px;height:6px;background:#2d4a78"></div>
<div class="a" style="left:59.5px;top:707.5px;width:1px;height:10.5px;background:#b9cbe2"></div>
<svg class="a" style="left:87.6px;top:707.5px" width="8" height="11"><path d="M0.5 10.5 L7.5 0.5" stroke="#a9bcd6" stroke-width="1"/></svg>
<svg class="a" style="left:121px;top:707.5px" width="8" height="11"><path d="M0.5 10.5 L7.5 0.5" stroke="#a9bcd6" stroke-width="1"/></svg>
<svg class="a" style="left:143.6px;top:707.5px" width="8" height="11"><path d="M0.5 10.5 L7.5 0.5" stroke="#a9bcd6" stroke-width="1"/></svg>
<svg class="a" style="left:169px;top:707.5px" width="8" height="11"><path d="M0.5 10.5 L7.5 0.5" stroke="#a9bcd6" stroke-width="1"/></svg>
<svg class="a" style="left:236px;top:707.5px" width="8" height="11"><path d="M0.5 10.5 L7.5 0.5" stroke="#a9bcd6" stroke-width="1"/></svg>
<svg class="a" style="left:302px;top:707.5px" width="8" height="11"><path d="M0.5 10.5 L7.5 0.5" stroke="#a9bcd6" stroke-width="1"/></svg>
<svg class="a" style="left:326.4px;top:707.5px" width="8" height="11"><path d="M0.5 10.5 L7.5 0.5" stroke="#a9bcd6" stroke-width="1"/></svg>
<svg class="a" style="left:347px;top:707.5px" width="8" height="11"><path d="M0.5 10.5 L7.5 0.5" stroke="#a9bcd6" stroke-width="1"/></svg>
<svg class="a" style="left:377.6px;top:707.5px" width="8" height="11"><path d="M0.5 10.5 L7.5 0.5" stroke="#a9bcd6" stroke-width="1"/></svg>
<svg class="a" style="left:432px;top:707.5px" width="8" height="11"><path d="M0.5 10.5 L7.5 0.5" stroke="#a9bcd6" stroke-width="1"/></svg>
<svg class="a" style="left:459px;top:707.5px" width="8" height="11"><path d="M0.5 10.5 L7.5 0.5" stroke="#a9bcd6" stroke-width="1"/></svg>
<svg class="a" style="left:492.8px;top:707.5px" width="8" height="11"><path d="M0.5 10.5 L7.5 0.5" stroke="#a9bcd6" stroke-width="1"/></svg>
<svg class="a" style="left:524.8px;top:707.5px" width="8" height="11"><path d="M0.5 10.5 L7.5 0.5" stroke="#a9bcd6" stroke-width="1"/></svg>
<svg class="a" style="left:302px;top:706.5px" width="34" height="12.5"><path d="M0 0 L34 0 L30 12 L4 12 Z" fill="#ffffff" stroke="#90a6c4" stroke-width="0.8"/><rect x="4" y="9" width="26" height="3" fill="#e2f0dc"/></svg>
<div class="sht" style="left:35px;width:80px;text-align:center;line-height:11px;font-size:7.8px">Main</div>
<div class="sht" style="left:68.5px;width:80px;text-align:center;line-height:11px;font-size:7.8px">Rules</div>
<div class="sht" style="left:98px;width:80px;text-align:center;line-height:11px;font-size:7.8px">R1</div>
<div class="sht" style="left:121.69999999999999px;width:80px;text-align:center;line-height:11px;font-size:7.8px">R2</div>
<div class="sht" style="left:166.8px;width:80px;text-align:center;line-height:11px;font-size:7.8px">S1_2ndSrvDB</div>
<div class="sht" style="left:233.8px;width:80px;text-align:center;line-height:11px;font-size:7.8px">S1_1stSrvDB</div>
<div class="sht" style="left:298.5px;width:40px;text-align:center;font-weight:bold;color:#1d2e1d;font-size:8.3px;line-height:11px">S1</div>
<div class="sht" style="left:300.8px;width:80px;text-align:center;line-height:11px;font-size:7.8px">S2</div>
<div class="sht" style="left:325.8px;width:80px;text-align:center;line-height:11px;font-size:7.8px">Co1</div>
<div class="sht" style="left:368.3px;width:80px;text-align:center;line-height:11px;font-size:7.8px">Map_Blend</div>
<div class="sht" style="left:410px;width:80px;text-align:center;line-height:11px;font-size:7.8px">Log</div>
<div class="sht" style="left:440.4px;width:80px;text-align:center;line-height:11px;font-size:7.8px">DB_T</div>
<div class="sht" style="left:473.29999999999995px;width:80px;text-align:center;line-height:11px;font-size:7.8px">Data</div>
<div class="a" style="left:537px;top:709px;width:10px;height:8px;background:#f6f6f6;border:1px solid #8a96a6;border-radius:1px"></div>
<div class="a" style="left:535px;top:707.5px;width:5px;height:5px;background:#e8b050;border-radius:50%;border:1px solid #a87a30"></div>
<svg class="a" style="left:549px;top:707.5px" width="190" height="11"><path d="M0 11 L8 0 L190 0 L190 11 Z" fill="#a3bbdc"/></svg>
<div class="a" style="left:738px;top:707.5px;width:238.5px;height:11px;background:linear-gradient(#9db6dc,#8ba6d1)"></div>
<div class="a" style="left:739px;top:708px;width:3px;height:10px;background:#f4f6f9;border:1px solid #8a9ab0"></div>
<div class="a" style="left:742.5px;top:708px;width:11px;height:10px;background:linear-gradient(#e8ecf2,#bcc6d4);border:1px solid #8a9ab0"></div>
<div class="a" style="left:746px;top:710px;border-top:3px solid transparent;border-bottom:3px solid transparent;border-right:3.5px solid #1e2a40"></div>
<div class="a" style="left:754px;top:708px;width:70.5px;height:10px;background:linear-gradient(#f3f6fa,#dfe6f0 45%,#c8d3e2 55%,#d2dbe8);border:1px solid #8a9ab0;border-radius:2px"></div>
<div class="a" style="left:786.5px;top:710.5px;width:5px;height:5px;border-left:1px solid #7a8aa0;border-right:1px solid #7a8aa0;background:linear-gradient(90deg,transparent 40%,#7a8aa0 40%,#7a8aa0 60%,transparent 60%)"></div>
<div class="a" style="left:964px;top:708px;width:11.5px;height:10px;background:linear-gradient(#e8ecf2,#bcc6d4);border:1px solid #8a9ab0"></div>
<div class="a" style="left:968px;top:710px;border-top:3px solid transparent;border-bottom:3px solid transparent;border-left:4px solid #1e2a40"></div>
<div class="a" style="left:14px;top:718.5px;width:975px;height:16.5px;background:linear-gradient(#dce8f6 0%,#cadcf1 50%,#bcd1ec 52%,#c8daf0 100%);border-radius:0 0 3px 3px"></div>
<div class="a" style="left:21px;top:721.5px;font-size:7.8px;color:#2b3e5e;line-height:10px">Ready</div>
<div class="a" style="left:51px;top:719px;width:1px;height:15px;background:#aebfd6"></div>
<div class="a" style="left:58px;top:721px;width:11px;height:9.5px;background:linear-gradient(#6a8ac0 0 2px,#f6f6f6 2px);border:1px solid #6a7a98"></div>
<div class="a" style="left:60px;top:726px;width:7px;height:2px;background:repeating-linear-gradient(90deg,#8aa 0 1px,transparent 1px 2px)"></div>
<div class="a" style="left:57px;top:720px;width:4.5px;height:4.5px;background:#d84040;border-radius:50%"></div>
<div class="a" style="left:14px;top:718px;width:975px;height:1px;background:#a9bcd4"></div>
<div class="a" style="left:75px;top:719px;width:1px;height:15px;background:#aebfd6"></div>
<div class="a" style="left:796px;top:719.5px;width:44px;height:14px;background:linear-gradient(#e6eef8,#d2e0f2);border-left:1px solid #b8c8de"></div>
<div class="a" style="left:797.5px;top:720px;width:14.5px;height:13px;background:linear-gradient(#fde9b8,#f8d28a);border:1px solid #e0b868;border-radius:1px"></div>
<div class="a" style="left:800px;top:722.5px;width:9.5px;height:8px;border:1px solid #8a8a7a;background:linear-gradient(90deg,transparent 30%,#8a8a7a 30%,#8a8a7a 40%,transparent 40%,transparent 63%,#8a8a7a 63%,#8a8a7a 73%,transparent 73%),linear-gradient(transparent 30%,#8a8a7a 30%,#8a8a7a 42%,transparent 42%,transparent 62%,#8a8a7a 62%,#8a8a7a 74%,transparent 74%),#f8f0c8"></div>
<div class="a" style="left:813px;top:721px;width:11.5px;height:11px;border:1px solid #6a7a90;background:linear-gradient(#fbfcfd,#dfe6ee)"></div>
<div class="a" style="left:815.5px;top:723px;width:6.5px;height:7px;border:1px solid #6a7a90;background:#fff"></div>
<div class="a" style="left:826.5px;top:721px;width:11.5px;height:11px;border:1px solid #6a7a90;background:linear-gradient(#fbfcfd,#dfe6ee)"></div>
<div class="a" style="left:829.5px;top:722px;width:5.5px;height:6px;border:1px solid #6a7a90;border-top:none;background:#fff"></div>
<div class="a" style="left:845px;top:721px;font-size:9px;color:#2b4a88;line-height:11px">100%</div>
<div class="a" style="left:884px;top:726.5px;width:77px;height:1px;background:#8aa0c0"></div>
<div class="a" style="left:884px;top:727.5px;width:77px;height:1px;background:#eef4fb"></div>
<div class="a" style="left:872.5px;top:720.5px;width:12.5px;height:12.5px;border-radius:50%;border:1px solid #7b8fb0;background:radial-gradient(circle at 50% 35%,#fff,#d6e2f2)"></div>
<div class="a" style="left:875.5px;top:726.2px;width:6.5px;height:1.5px;background:#333"></div>
<div class="a" style="left:919.5px;top:721px;width:6px;height:10px;background:linear-gradient(#fafcfe,#d0dcea);border:1px solid #7a8ca6;border-radius:1px 1px 3px 3px"></div>
<div class="a" style="left:960.5px;top:720.5px;width:12.5px;height:12.5px;border-radius:50%;border:1px solid #7b8fb0;background:radial-gradient(circle at 50% 35%,#fff,#d6e2f2)"></div>
<div class="a" style="left:963.5px;top:726.2px;width:6.5px;height:1.5px;background:#333"></div>
<div class="a" style="left:966px;top:723.7px;width:1.5px;height:6.5px;background:#333"></div>
<div class="a" style="left:977px;top:724px;width:9px;height:9px;background:radial-gradient(circle,#6b86ae 40%,transparent 45%) 0 0/3px 3px;clip-path:polygon(100% 0,100% 100%,0 100%)"></div>
</body></html>
